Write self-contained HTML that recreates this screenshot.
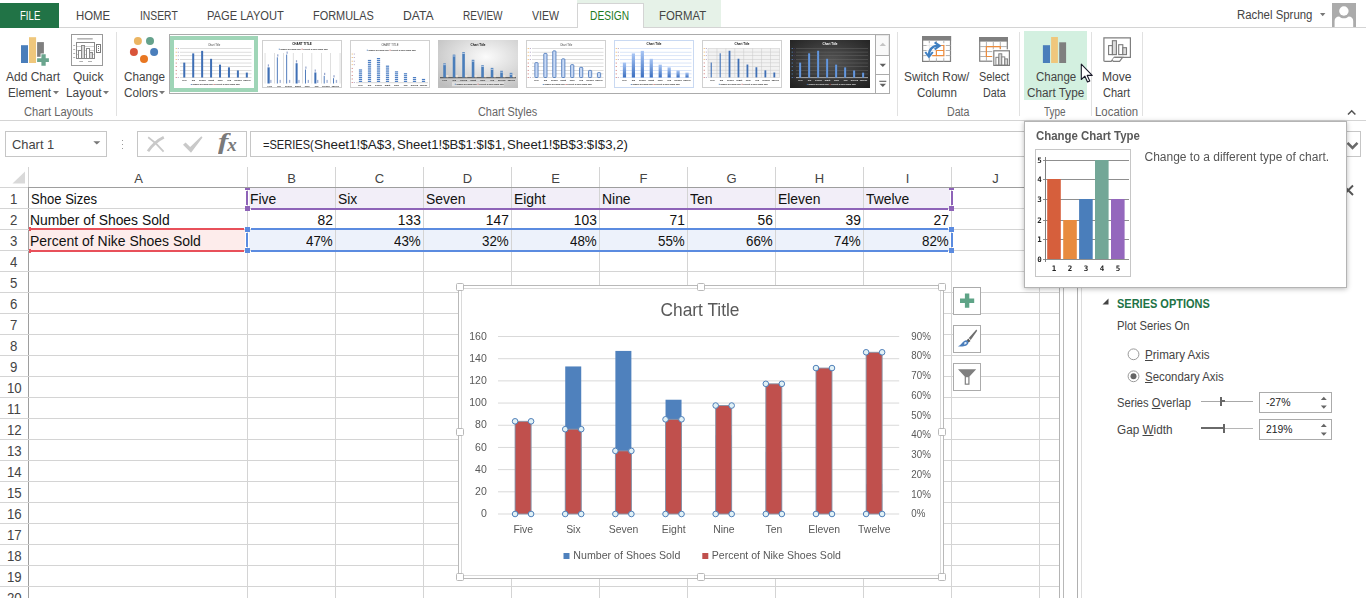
<!DOCTYPE html>
<html lang="en"><head><meta charset="utf-8"><title>Excel - Change Chart Type</title>
<style>
html,body{margin:0;padding:0;}
body{width:1366px;height:598px;overflow:hidden;background:#fff;position:relative;font-family:"Liberation Sans",sans-serif;}
.a{position:absolute;box-sizing:border-box;}
.t{position:absolute;white-space:nowrap;transform-origin:0 0;}
svg{position:absolute;overflow:visible;}
u{text-decoration:underline;}
</style></head><body>
<div class="a" style="left:577px;top:0px;width:144px;height:27px;background:#e6f2e8;"></div>
<div class="a" style="left:0px;top:27px;width:1366px;height:1px;background:#d4d4d4;"></div>
<div class="a" style="left:0px;top:3px;width:59px;height:25px;background:#217346;"></div>
<span class="t" style="left:19.50px;top:8.80px;font-size:12px;line-height:14px;color:#fff;transform:scaleX(0.8010);">FILE</span>
<span class="t" style="left:76.40px;top:8.80px;font-size:12px;line-height:14px;color:#444;transform:scaleX(0.9472);">HOME</span>
<span class="t" style="left:139.80px;top:8.80px;font-size:12px;line-height:14px;color:#444;transform:scaleX(0.8610);">INSERT</span>
<span class="t" style="left:207.00px;top:8.80px;font-size:12px;line-height:14px;color:#444;transform:scaleX(0.9263);">PAGE LAYOUT</span>
<span class="t" style="left:313.00px;top:8.80px;font-size:12px;line-height:14px;color:#444;transform:scaleX(0.9104);">FORMULAS</span>
<span class="t" style="left:403.00px;top:8.80px;font-size:12px;line-height:14px;color:#444;transform:scaleX(1.0157);">DATA</span>
<span class="t" style="left:463.40px;top:8.80px;font-size:12px;line-height:14px;color:#444;transform:scaleX(0.8365);">REVIEW</span>
<span class="t" style="left:531.90px;top:8.80px;font-size:12px;line-height:14px;color:#444;transform:scaleX(0.8836);">VIEW</span>
<div class="a" style="left:577px;top:3px;width:67px;height:25px;background:#fff;border:1px solid #d4d4d4;border-bottom:none;"></div>
<span class="t" style="left:590.40px;top:8.80px;font-size:12px;line-height:14px;color:#1e7a1e;transform:scaleX(0.8520);">DESIGN</span>
<span class="t" style="left:659.20px;top:8.80px;font-size:12px;line-height:14px;color:#444;transform:scaleX(0.9463);">FORMAT</span>
<span class="t" style="left:1236.80px;top:8.00px;font-size:12px;line-height:14px;color:#444;transform:scaleX(0.9498);">Rachel Sprung</span>
<svg style="left:1319px;top:12px" width="8" height="5"><path d="M1 1h5.4l-2.7 3.2z" fill="#777"/></svg>
<div class="a" style="left:1332px;top:3px;width:24px;height:24px;background:#ababab;"></div>
<svg style="left:1332px;top:3px" width="24" height="24"><circle cx="11.9" cy="8" r="4.7" fill="#fff"/><path d="M2.6 24v-6c0-3 2-4.6 4.500-4.600c1.500 1.300 3 1.800 4.800 1.800s3.300-0.500 4.800-1.800c2.500 0 4.500 1.600 4.500 4.600v6z" fill="#fff"/></svg>
<div class="a" style="left:0px;top:120px;width:1366px;height:1px;background:#d4d4d4;"></div>
<div class="a" style="left:116px;top:32px;width:1px;height:84px;background:#e1e1e1;"></div>
<div class="a" style="left:897px;top:32px;width:1px;height:84px;background:#e1e1e1;"></div>
<div class="a" style="left:1019px;top:32px;width:1px;height:84px;background:#e1e1e1;"></div>
<div class="a" style="left:1091px;top:32px;width:1px;height:84px;background:#e1e1e1;"></div>
<div class="a" style="left:1142px;top:32px;width:1px;height:84px;background:#e1e1e1;"></div>
<span class="t" style="left:6.00px;top:70.00px;font-size:12px;line-height:14px;color:#444;">Add Chart</span>
<span class="t" style="left:8.00px;top:85.50px;font-size:12px;line-height:14px;color:#444;transform:scaleX(0.9768);">Element</span>
<span class="t" style="left:72.60px;top:70.00px;font-size:12px;line-height:14px;color:#444;transform:scaleX(0.9911);">Quick</span>
<span class="t" style="left:65.50px;top:85.50px;font-size:12px;line-height:14px;color:#444;transform:scaleX(0.9853);">Layout</span>
<span class="t" style="left:124.00px;top:70.00px;font-size:12px;line-height:14px;color:#444;transform:scaleX(0.9753);">Change</span>
<span class="t" style="left:123.50px;top:85.50px;font-size:12px;line-height:14px;color:#444;transform:scaleX(0.9805);">Colors</span>
<svg style="left:53px;top:91px" width="7" height="4"><path d="M0 0h6l-3 3.2z" fill="#777"/></svg>
<svg style="left:103px;top:91px" width="7" height="4"><path d="M0 0h6l-3 3.2z" fill="#777"/></svg>
<svg style="left:159px;top:91px" width="7" height="4"><path d="M0 0h6l-3 3.2z" fill="#777"/></svg>
<span class="t" style="left:23.50px;top:104.70px;font-size:12px;line-height:14px;color:#666;transform:scaleX(0.9249);">Chart Layouts</span>
<span class="t" style="left:477.50px;top:104.50px;font-size:12px;line-height:14px;color:#666;transform:scaleX(0.9058);">Chart Styles</span>
<span class="t" style="left:946.50px;top:104.60px;font-size:12px;line-height:14px;color:#666;transform:scaleX(0.8876);">Data</span>
<span class="t" style="left:1044.40px;top:104.60px;font-size:12px;line-height:14px;color:#666;transform:scaleX(0.8302);">Type</span>
<span class="t" style="left:1095.20px;top:104.60px;font-size:12px;line-height:14px;color:#666;transform:scaleX(0.9500);">Location</span>
<div class="a" style="left:1024px;top:31px;width:63px;height:69px;background:#d3f0e0;"></div>
<span class="t" style="left:904.20px;top:70.00px;font-size:12px;line-height:14px;color:#444;transform:scaleX(0.9906);">Switch Row/</span>
<span class="t" style="left:916.60px;top:85.80px;font-size:12px;line-height:14px;color:#444;transform:scaleX(0.9649);">Column</span>
<span class="t" style="left:978.50px;top:70.00px;font-size:12px;line-height:14px;color:#444;transform:scaleX(0.9085);">Select</span>
<span class="t" style="left:982.50px;top:85.80px;font-size:12px;line-height:14px;color:#444;transform:scaleX(0.8955);">Data</span>
<span class="t" style="left:1035.50px;top:70.00px;font-size:12px;line-height:14px;color:#444;transform:scaleX(0.9563);">Change</span>
<span class="t" style="left:1026.60px;top:85.80px;font-size:12px;line-height:14px;color:#444;transform:scaleX(0.9781);">Chart Type</span>
<span class="t" style="left:1102.30px;top:70.00px;font-size:12px;line-height:14px;color:#444;transform:scaleX(1.0087);">Move</span>
<span class="t" style="left:1103.00px;top:85.80px;font-size:12px;line-height:14px;color:#444;transform:scaleX(0.9201);">Chart</span>
<svg style="left:1347px;top:109px" width="10" height="7"><path d="M1 5.5l3.7-3.7 3.7 3.7" fill="none" stroke="#555" stroke-width="1.6"/></svg>
<svg style="left:20px;top:36px" width="30" height="31">
<rect x="1" y="9.2" width="7" height="17.8" fill="#4a7ebb"/>
<rect x="9" y="1.2" width="7.1" height="25.8" fill="#efc77c"/>
<rect x="17.1" y="6.1" width="6.8" height="14.7" fill="#7f7f7f"/>
<path d="M20.6 17.6h5.8v4h3.4v5.2h-3.4v3.4h-5.8v-3.4h-4.2v-5.2h4.2z" fill="#fff"/>
<path d="M21.4 18.3h4.3v4h3.2v3.8h-3.2v3.6h-4.3v-3.6h-4.3v-3.8h4.3z" fill="#6aa58e"/>
</svg>
<svg style="left:71px;top:34px" width="33" height="33">
<rect x="0.5" y="0.5" width="31" height="31" fill="#fff" stroke="#9a9a9a"/>
<rect x="6.2" y="4" width="15.5" height="1.6" fill="#b5b5b5"/>
<rect x="5.5" y="8.5" width="18" height="16" fill="#fff" stroke="#8a8a8a"/>
<path d="M6 12.5h17M6 16.5h17M6 20.5h17" stroke="#cfcfcf" stroke-width="1"/>
<path d="M2.2 11.5h2M2.2 15.5h2M2.2 19.5h2M2.2 23.5h2" stroke="#b0b0b0"/>
<rect x="7.5" y="16.5" width="3" height="8" fill="#fff" stroke="#8a8a8a"/>
<rect x="10.5" y="11.5" width="3" height="13" fill="#d8d8d8" stroke="#8a8a8a"/>
<rect x="15.5" y="14.5" width="3" height="10" fill="#fff" stroke="#8a8a8a"/>
<rect x="18.5" y="18.5" width="3" height="6" fill="#d8d8d8" stroke="#8a8a8a"/>
<rect x="25.5" y="10.5" width="4" height="8" fill="#fff" stroke="#7a7a7a"/>
<path d="M27 12.5h1M27 14.5h1M27 16.5h1" stroke="#7a7a7a"/>
<path d="M8.3 27.5h3.7M17 27.5h4" stroke="#b0b0b0"/>
</svg>
<svg style="left:128px;top:35px" width="32" height="30">
<circle cx="9.9" cy="6" r="4" fill="#ebb563"/><circle cx="22" cy="6" r="4" fill="#65a28c"/>
<circle cx="5.9" cy="17" r="4" fill="#d9543a"/><circle cx="26.1" cy="17" r="4" fill="#4a7ebb"/>
<circle cx="16" cy="23.9" r="4" fill="#e87722"/></svg>
<svg style="left:922px;top:36px" width="30" height="27">
<rect x="0.6" y="0.6" width="27.9" height="24.8" fill="#fff" stroke="#7f7f7f" stroke-width="1.2"/>
<rect x="0" y="0" width="29.1" height="4.6" fill="#7f7f7f"/>
<path d="M1 9.5h27.5M1 14.5h27.5M1 19.6h27.5M7.3 4.6v21M14.4 4.6v21M21.8 4.6v21" stroke="#b0b0b0" stroke-width="1"/>
<path d="M4.5 7h19.5v15.2h-19.5z" fill="#fff" opacity="0.75"/>
<path d="M17.9 9.5H21.8V19.6H10.2M14.4 19.6V14.5H21.8" fill="none" stroke="#ee8c3c" stroke-width="1.2"/>
<path d="M7 19.5C6.8 13.5 10.5 9.8 16.5 9.7" fill="none" stroke="#3f7fc1" stroke-width="2.3"/>
<path d="M12.6 6.3l5.2 3.5-5.2 3.6" fill="none" stroke="#3f7fc1" stroke-width="2"/>
<path d="M3.3 16l3.7 4.8 3.8-4.8" fill="none" stroke="#3f7fc1" stroke-width="2"/>
</svg>
<svg style="left:979px;top:37px" width="33" height="30">
<rect x="0.7" y="0.6" width="27.6" height="23.6" fill="#fff" stroke="#7f7f7f" stroke-width="1.2"/>
<rect x="0.1" y="0" width="28.8" height="4.6" fill="#7f7f7f"/>
<path d="M1 9.6h27M1 14.6h27M1 19.5h27M7.4 4.6v19.5M14.3 4.6v19.5M21.3 4.6v19.5" stroke="#b0b0b0" stroke-width="1"/>
<path d="M21.3 12.2V9.6H7.4V19.5H13.5" fill="none" stroke="#ee8c3c" stroke-width="1.2"/>
<rect x="13.3" y="12.3" width="18.6" height="17.3" fill="#fff"/>
<rect x="14.8" y="13.8" width="15.6" height="14.6" fill="#fff" stroke="#7f7f7f" stroke-width="1.2"/>
<rect x="16.9" y="20.3" width="2.9" height="7.7" fill="#fff" stroke="#7a7a7a" stroke-width="0.9"/>
<rect x="19.8" y="16.8" width="3" height="11.2" fill="#d6d6d6" stroke="#7a7a7a" stroke-width="0.9"/>
<rect x="22.8" y="19.9" width="3" height="8.1" fill="#fff" stroke="#7a7a7a" stroke-width="0.9"/>
<rect x="25.8" y="21.9" width="2.8" height="6.1" fill="#d6d6d6" stroke="#7a7a7a" stroke-width="0.9"/>
</svg>
<svg style="left:1042px;top:36px" width="26" height="28">
<rect x="0.9" y="9.2" width="7.1" height="17.8" fill="#4a7ebb"/>
<rect x="9.1" y="1" width="6.8" height="26" fill="#efc77c"/>
<rect x="17.2" y="6.3" width="6.9" height="20.7" fill="#7f7f7f"/>
</svg>
<svg style="left:1103px;top:37px" width="29" height="27">
<path d="M0.9 0.9H27.4V20.4H11.2L8.2 24.4H1.9Q0.9 24.4 0.9 23.4Z" fill="#fff" stroke="#7f7f7f" stroke-width="1.2"/>
<path d="M11.2 20.4H19.6L16.6 24.4H10.2L9.3 23" fill="#fff" stroke="#7f7f7f" stroke-width="1.2"/>
<rect x="5.6" y="8.6" width="3.8" height="9" fill="#fff" stroke="#7a7a7a" stroke-width="1.1"/>
<rect x="9.4" y="3.7" width="4" height="13.9" fill="#dcdcdc" stroke="#7a7a7a" stroke-width="1.1"/>
<rect x="15.7" y="7.7" width="4.1" height="9.9" fill="#fff" stroke="#7a7a7a" stroke-width="1.1"/>
<rect x="19.8" y="10.7" width="3.7" height="6.9" fill="#dcdcdc" stroke="#7a7a7a" stroke-width="1.1"/>
</svg>
<div class="a" style="left:169px;top:34px;width:721px;height:60px;background:#fff;border:1px solid #ababab;"></div>
<div class="a" style="left:875px;top:34px;width:1px;height:59px;background:#ababab;"></div>
<div class="a" style="left:876px;top:55px;width:13px;height:1px;background:#ababab;"></div>
<div class="a" style="left:876px;top:74px;width:13px;height:1px;background:#ababab;"></div>
<div class="a" style="left:876px;top:35px;width:13px;height:20px;background:#f9f9f9;border:1px solid #e6e6e6;border-left:none;border-bottom:none;"></div>
<svg style="left:879px;top:42px" width="8" height="5"><path d="M0.6 4h6.4l-3.2-3.2z" fill="#c4c4c4"/></svg>
<svg style="left:879px;top:63px" width="8" height="5"><path d="M0.6 0.8h6.4l-3.2 3.2z" fill="#5f5f5f"/></svg>
<svg style="left:879px;top:80px" width="8" height="9"><path d="M0.3 1.3h7" stroke="#5f5f5f" stroke-width="1.1"/><path d="M0.6 3.8h6.4l-3.2 3.2z" fill="#5f5f5f"/></svg>
<div class="a" style="left:170px;top:36px;width:88px;height:56px;background:#9fd5b7;"></div>
<svg style="left:174px;top:40px;will-change:transform" width="80" height="48" viewBox="0 0 80 48"><rect x="0.5" y="0.5" width="79" height="47" fill="#fff" stroke="#fff"/><text x="40" y="5.5" font-size="2.7" font-weight="normal" text-anchor="middle" fill="#444" font-family="Liberation Sans,sans-serif">Chart Title</text><rect x="6" y="8.25" width="71.5" height="0.55" fill="#c2c2c2"/><rect x="6" y="11.88" width="71.5" height="0.55" fill="#c2c2c2"/><rect x="6" y="15.50" width="71.5" height="0.55" fill="#c2c2c2"/><rect x="6" y="19.12" width="71.5" height="0.55" fill="#c2c2c2"/><rect x="6" y="22.75" width="71.5" height="0.55" fill="#c2c2c2"/><rect x="6" y="26.38" width="71.5" height="0.55" fill="#c2c2c2"/><rect x="6" y="30.00" width="71.5" height="0.55" fill="#c2c2c2"/><rect x="6" y="33.62" width="71.5" height="0.55" fill="#c2c2c2"/><rect x="6" y="37.25" width="71.5" height="0.55" fill="#c2c2c2"/><rect x="1.5999999999999996" y="8.20" width="1.4" height="0.7" fill="#e9a23b" opacity="0.8"/><rect x="3.8" y="8.20" width="0.9" height="0.7" fill="#5b3f8c" opacity="0.8"/><rect x="1.5999999999999996" y="11.82" width="1.4" height="0.7" fill="#e9a23b" opacity="0.8"/><rect x="3.8" y="11.82" width="0.9" height="0.7" fill="#5b3f8c" opacity="0.8"/><rect x="1.5999999999999996" y="15.45" width="1.4" height="0.7" fill="#e9a23b" opacity="0.8"/><rect x="3.8" y="15.45" width="0.9" height="0.7" fill="#5b3f8c" opacity="0.8"/><rect x="1.5999999999999996" y="19.07" width="1.4" height="0.7" fill="#e9a23b" opacity="0.8"/><rect x="3.8" y="19.07" width="0.9" height="0.7" fill="#5b3f8c" opacity="0.8"/><rect x="1.5999999999999996" y="22.70" width="1.4" height="0.7" fill="#c0504d" opacity="0.8"/><rect x="1.5999999999999996" y="26.32" width="1.4" height="0.7" fill="#c0504d" opacity="0.8"/><rect x="1.5999999999999996" y="29.95" width="1.4" height="0.7" fill="#c0504d" opacity="0.8"/><rect x="1.5999999999999996" y="33.58" width="1.4" height="0.7" fill="#c0504d" opacity="0.8"/><rect x="1.5999999999999996" y="37.20" width="1.4" height="0.7" fill="#c0504d" opacity="0.8"/><rect x="3.8" y="37.20" width="0.9" height="0.7" fill="#5b3f8c" opacity="0.8"/><rect x="9.27" y="22.64" width="2" height="14.86" fill="#3f6fb5"/><rect x="18.21" y="13.39" width="2" height="24.11" fill="#3f6fb5"/><rect x="27.14" y="10.86" width="2" height="26.64" fill="#3f6fb5"/><rect x="36.08" y="18.83" width="2" height="18.67" fill="#3f6fb5"/><rect x="45.02" y="24.63" width="2" height="12.87" fill="#3f6fb5"/><rect x="53.96" y="27.35" width="2" height="10.15" fill="#3f6fb5"/><rect x="62.89" y="30.43" width="2" height="7.07" fill="#3f6fb5"/><rect x="71.83" y="32.61" width="2" height="4.89" fill="#3f6fb5"/><text x="10.47" y="41.3" font-size="2.3" font-weight="bold" text-anchor="middle" fill="#222" font-family="Liberation Sans,sans-serif">Five</text><text x="19.41" y="41.3" font-size="2.3" font-weight="bold" text-anchor="middle" fill="#222" font-family="Liberation Sans,sans-serif">Six</text><text x="28.34" y="41.3" font-size="2.3" font-weight="bold" text-anchor="middle" fill="#222" font-family="Liberation Sans,sans-serif">Seven</text><text x="37.28" y="41.3" font-size="2.3" font-weight="bold" text-anchor="middle" fill="#222" font-family="Liberation Sans,sans-serif">Eight</text><text x="46.22" y="41.3" font-size="2.3" font-weight="bold" text-anchor="middle" fill="#222" font-family="Liberation Sans,sans-serif">Nine</text><text x="55.16" y="41.3" font-size="2.3" font-weight="bold" text-anchor="middle" fill="#222" font-family="Liberation Sans,sans-serif">Ten</text><text x="64.09" y="41.3" font-size="2.3" font-weight="bold" text-anchor="middle" fill="#222" font-family="Liberation Sans,sans-serif">Eleven</text><text x="73.03" y="41.3" font-size="2.3" font-weight="bold" text-anchor="middle" fill="#222" font-family="Liberation Sans,sans-serif">Twelve</text><rect x="16.8" y="44.0" width="1" height="1" fill="#4a7ebb"/><text x="18.4" y="45.3" font-size="1.9" font-weight="bold" fill="#222" font-family="Liberation Sans,sans-serif">Number of Shoes Sold</text><rect x="39.6" y="44.0" width="1" height="1" fill="#c0504d"/><text x="41.2" y="45.3" font-size="1.9" font-weight="bold" fill="#222" font-family="Liberation Sans,sans-serif">Percent of Nike Shoes Sold</text></svg>
<svg style="left:262px;top:40px;will-change:transform" width="80" height="48" viewBox="0 0 80 48"><rect x="0.5" y="0.5" width="79" height="47" fill="#fff" stroke="#d0d0d0"/><text x="40" y="5" font-size="3.0" font-weight="bold" text-anchor="middle" fill="#111" font-family="Liberation Sans,sans-serif">CHART TITLE</text><rect x="2.80" y="13" width="0.45" height="30.5" fill="#b8b8b8"/><rect x="12.18" y="13" width="0.45" height="30.5" fill="#b8b8b8"/><rect x="21.55" y="13" width="0.45" height="30.5" fill="#b8b8b8"/><rect x="30.93" y="13" width="0.45" height="30.5" fill="#b8b8b8"/><rect x="40.30" y="13" width="0.45" height="30.5" fill="#b8b8b8"/><rect x="49.67" y="13" width="0.45" height="30.5" fill="#b8b8b8"/><rect x="59.05" y="13" width="0.45" height="30.5" fill="#b8b8b8"/><rect x="68.42" y="13" width="0.45" height="30.5" fill="#b8b8b8"/><rect x="77.80" y="13" width="0.45" height="30.5" fill="#b8b8b8"/><rect x="5.49" y="27.36" width="2.2" height="16.14" fill="#3f6fb5"/><rect x="5.79" y="24.36" width="1.2" height="2.2" fill="#7b8fc0" opacity="0.8"/><rect x="8.19" y="39.90" width="1.3" height="3" fill="#7b8fc0" opacity="0.7"/><rect x="14.86" y="17.32" width="0.9" height="26.18" fill="#3f6fb5"/><rect x="15.16" y="14.32" width="1.2" height="2.2" fill="#7b8fc0" opacity="0.8"/><rect x="17.56" y="39.90" width="1.3" height="3" fill="#7b8fc0" opacity="0.7"/><rect x="24.24" y="14.56" width="0.9" height="28.94" fill="#3f6fb5"/><rect x="24.54" y="11.56" width="1.2" height="2.2" fill="#7b8fc0" opacity="0.8"/><rect x="26.94" y="39.90" width="1.3" height="3" fill="#7b8fc0" opacity="0.7"/><rect x="33.61" y="23.22" width="2" height="20.28" fill="#3f6fb5"/><rect x="33.91" y="20.22" width="1.2" height="2.2" fill="#7b8fc0" opacity="0.8"/><rect x="36.31" y="39.90" width="1.3" height="3" fill="#7b8fc0" opacity="0.7"/><rect x="42.99" y="29.52" width="0.9" height="13.98" fill="#3f6fb5"/><rect x="43.29" y="26.52" width="1.2" height="2.2" fill="#7b8fc0" opacity="0.8"/><rect x="45.69" y="39.90" width="1.3" height="3" fill="#7b8fc0" opacity="0.7"/><rect x="52.36" y="32.48" width="2" height="11.03" fill="#3f6fb5"/><rect x="52.66" y="29.48" width="1.2" height="2.2" fill="#7b8fc0" opacity="0.8"/><rect x="55.06" y="39.90" width="1.3" height="3" fill="#7b8fc0" opacity="0.7"/><rect x="61.74" y="35.82" width="0.9" height="7.68" fill="#3f6fb5"/><rect x="62.04" y="32.82" width="1.2" height="2.2" fill="#7b8fc0" opacity="0.8"/><rect x="64.44" y="39.90" width="1.3" height="3" fill="#7b8fc0" opacity="0.7"/><rect x="71.11" y="38.18" width="0.9" height="5.32" fill="#3f6fb5"/><rect x="71.41" y="35.18" width="1.2" height="2.2" fill="#7b8fc0" opacity="0.8"/><rect x="73.81" y="39.90" width="1.3" height="3" fill="#7b8fc0" opacity="0.7"/><text x="7.69" y="46.8" font-size="2.3" font-weight="bold" text-anchor="middle" fill="#222" font-family="Liberation Sans,sans-serif">Five</text><text x="17.06" y="46.8" font-size="2.3" font-weight="bold" text-anchor="middle" fill="#222" font-family="Liberation Sans,sans-serif">Six</text><text x="26.44" y="46.8" font-size="2.3" font-weight="bold" text-anchor="middle" fill="#222" font-family="Liberation Sans,sans-serif">Seven</text><text x="35.81" y="46.8" font-size="2.3" font-weight="bold" text-anchor="middle" fill="#222" font-family="Liberation Sans,sans-serif">Eight</text><text x="45.19" y="46.8" font-size="2.3" font-weight="bold" text-anchor="middle" fill="#222" font-family="Liberation Sans,sans-serif">Nine</text><text x="54.56" y="46.8" font-size="2.3" font-weight="bold" text-anchor="middle" fill="#222" font-family="Liberation Sans,sans-serif">Ten</text><text x="63.94" y="46.8" font-size="2.3" font-weight="bold" text-anchor="middle" fill="#222" font-family="Liberation Sans,sans-serif">Eleven</text><text x="73.31" y="46.8" font-size="2.3" font-weight="bold" text-anchor="middle" fill="#222" font-family="Liberation Sans,sans-serif">Twelve</text><rect x="16.8" y="8.7" width="1" height="1" fill="#4a7ebb"/><text x="18.4" y="10.0" font-size="1.9" font-weight="bold" fill="#222" font-family="Liberation Sans,sans-serif">Number of Shoes Sold</text><rect x="39.6" y="8.7" width="1" height="1" fill="#c0504d"/><text x="41.2" y="10.0" font-size="1.9" font-weight="bold" fill="#222" font-family="Liberation Sans,sans-serif">Percent of Nike Shoes Sold</text></svg>
<svg style="left:350px;top:40px;will-change:transform" width="80" height="48" viewBox="0 0 80 48"><rect x="0.5" y="0.5" width="79" height="47" fill="#fff" stroke="#d0d0d0"/><text x="40" y="6" font-size="2.7" font-weight="normal" text-anchor="middle" fill="#444" font-family="Liberation Sans,sans-serif">CHART TITLE</text><rect x="6" y="42.5" width="72" height="0.6" fill="#bdbdbd"/><rect x="1.5999999999999996" y="13.70" width="1.4" height="0.7" fill="#e9a23b" opacity="0.8"/><rect x="3.8" y="13.70" width="0.9" height="0.7" fill="#5b3f8c" opacity="0.8"/><rect x="1.5999999999999996" y="17.26" width="1.4" height="0.7" fill="#e9a23b" opacity="0.8"/><rect x="3.8" y="17.26" width="0.9" height="0.7" fill="#5b3f8c" opacity="0.8"/><rect x="1.5999999999999996" y="20.82" width="1.4" height="0.7" fill="#e9a23b" opacity="0.8"/><rect x="3.8" y="20.82" width="0.9" height="0.7" fill="#5b3f8c" opacity="0.8"/><rect x="1.5999999999999996" y="24.39" width="1.4" height="0.7" fill="#e9a23b" opacity="0.8"/><rect x="3.8" y="24.39" width="0.9" height="0.7" fill="#5b3f8c" opacity="0.8"/><rect x="1.5999999999999996" y="27.95" width="1.4" height="0.7" fill="#c0504d" opacity="0.8"/><rect x="1.5999999999999996" y="31.51" width="1.4" height="0.7" fill="#c0504d" opacity="0.8"/><rect x="1.5999999999999996" y="35.08" width="1.4" height="0.7" fill="#c0504d" opacity="0.8"/><rect x="1.5999999999999996" y="38.64" width="1.4" height="0.7" fill="#c0504d" opacity="0.8"/><rect x="1.5999999999999996" y="42.20" width="1.4" height="0.7" fill="#c0504d" opacity="0.8"/><rect x="3.8" y="42.20" width="0.9" height="0.7" fill="#5b3f8c" opacity="0.8"/><rect x="8.90" y="40.80" width="3.2" height="1.2" fill="#4d7fc4"/><rect x="8.90" y="38.90" width="3.2" height="1.2" fill="#4d7fc4"/><rect x="8.90" y="37.00" width="3.2" height="1.2" fill="#4d7fc4"/><rect x="8.90" y="35.10" width="3.2" height="1.2" fill="#4d7fc4"/><rect x="8.90" y="33.20" width="3.2" height="1.2" fill="#4d7fc4"/><rect x="8.90" y="31.30" width="3.2" height="1.2" fill="#4d7fc4"/><rect x="8.90" y="29.40" width="3.2" height="1.2" fill="#4d7fc4"/><rect x="17.90" y="40.80" width="3.2" height="1.2" fill="#4d7fc4"/><rect x="17.90" y="38.90" width="3.2" height="1.2" fill="#4d7fc4"/><rect x="17.90" y="37.00" width="3.2" height="1.2" fill="#4d7fc4"/><rect x="17.90" y="35.10" width="3.2" height="1.2" fill="#4d7fc4"/><rect x="17.90" y="33.20" width="3.2" height="1.2" fill="#4d7fc4"/><rect x="17.90" y="31.30" width="3.2" height="1.2" fill="#4d7fc4"/><rect x="17.90" y="29.40" width="3.2" height="1.2" fill="#4d7fc4"/><rect x="17.90" y="27.50" width="3.2" height="1.2" fill="#4d7fc4"/><rect x="17.90" y="25.60" width="3.2" height="1.2" fill="#4d7fc4"/><rect x="17.90" y="23.70" width="3.2" height="1.2" fill="#4d7fc4"/><rect x="17.90" y="21.80" width="3.2" height="1.2" fill="#4d7fc4"/><rect x="17.90" y="19.90" width="3.2" height="1.2" fill="#4d7fc4"/><rect x="26.90" y="40.80" width="3.2" height="1.2" fill="#4d7fc4"/><rect x="26.90" y="38.90" width="3.2" height="1.2" fill="#4d7fc4"/><rect x="26.90" y="37.00" width="3.2" height="1.2" fill="#4d7fc4"/><rect x="26.90" y="35.10" width="3.2" height="1.2" fill="#4d7fc4"/><rect x="26.90" y="33.20" width="3.2" height="1.2" fill="#4d7fc4"/><rect x="26.90" y="31.30" width="3.2" height="1.2" fill="#4d7fc4"/><rect x="26.90" y="29.40" width="3.2" height="1.2" fill="#4d7fc4"/><rect x="26.90" y="27.50" width="3.2" height="1.2" fill="#4d7fc4"/><rect x="26.90" y="25.60" width="3.2" height="1.2" fill="#4d7fc4"/><rect x="26.90" y="23.70" width="3.2" height="1.2" fill="#4d7fc4"/><rect x="26.90" y="21.80" width="3.2" height="1.2" fill="#4d7fc4"/><rect x="26.90" y="19.90" width="3.2" height="1.2" fill="#4d7fc4"/><rect x="26.90" y="18.00" width="3.2" height="1.2" fill="#4d7fc4"/><rect x="35.90" y="40.80" width="3.2" height="1.2" fill="#4d7fc4"/><rect x="35.90" y="38.90" width="3.2" height="1.2" fill="#4d7fc4"/><rect x="35.90" y="37.00" width="3.2" height="1.2" fill="#4d7fc4"/><rect x="35.90" y="35.10" width="3.2" height="1.2" fill="#4d7fc4"/><rect x="35.90" y="33.20" width="3.2" height="1.2" fill="#4d7fc4"/><rect x="35.90" y="31.30" width="3.2" height="1.2" fill="#4d7fc4"/><rect x="35.90" y="29.40" width="3.2" height="1.2" fill="#4d7fc4"/><rect x="35.90" y="27.50" width="3.2" height="1.2" fill="#4d7fc4"/><rect x="35.90" y="25.60" width="3.2" height="1.2" fill="#4d7fc4"/><rect x="44.90" y="40.80" width="3.2" height="1.2" fill="#4d7fc4"/><rect x="44.90" y="38.90" width="3.2" height="1.2" fill="#4d7fc4"/><rect x="44.90" y="37.00" width="3.2" height="1.2" fill="#4d7fc4"/><rect x="44.90" y="35.10" width="3.2" height="1.2" fill="#4d7fc4"/><rect x="44.90" y="33.20" width="3.2" height="1.2" fill="#4d7fc4"/><rect x="44.90" y="31.30" width="3.2" height="1.2" fill="#4d7fc4"/><rect x="53.90" y="40.80" width="3.2" height="1.2" fill="#4d7fc4"/><rect x="53.90" y="38.90" width="3.2" height="1.2" fill="#4d7fc4"/><rect x="53.90" y="37.00" width="3.2" height="1.2" fill="#4d7fc4"/><rect x="53.90" y="35.10" width="3.2" height="1.2" fill="#4d7fc4"/><rect x="53.90" y="33.20" width="3.2" height="1.2" fill="#4d7fc4"/><rect x="62.90" y="40.80" width="3.2" height="1.2" fill="#4d7fc4"/><rect x="62.90" y="38.90" width="3.2" height="1.2" fill="#4d7fc4"/><rect x="62.90" y="37.00" width="3.2" height="1.2" fill="#4d7fc4"/><rect x="71.90" y="40.80" width="3.2" height="1.2" fill="#4d7fc4"/><rect x="71.90" y="38.90" width="3.2" height="1.2" fill="#4d7fc4"/><text x="10.50" y="46.3" font-size="2.3" font-weight="bold" text-anchor="middle" fill="#222" font-family="Liberation Sans,sans-serif">Five</text><text x="19.50" y="46.3" font-size="2.3" font-weight="bold" text-anchor="middle" fill="#222" font-family="Liberation Sans,sans-serif">Six</text><text x="28.50" y="46.3" font-size="2.3" font-weight="bold" text-anchor="middle" fill="#222" font-family="Liberation Sans,sans-serif">Seven</text><text x="37.50" y="46.3" font-size="2.3" font-weight="bold" text-anchor="middle" fill="#222" font-family="Liberation Sans,sans-serif">Eight</text><text x="46.50" y="46.3" font-size="2.3" font-weight="bold" text-anchor="middle" fill="#222" font-family="Liberation Sans,sans-serif">Nine</text><text x="55.50" y="46.3" font-size="2.3" font-weight="bold" text-anchor="middle" fill="#222" font-family="Liberation Sans,sans-serif">Ten</text><text x="64.50" y="46.3" font-size="2.3" font-weight="bold" text-anchor="middle" fill="#222" font-family="Liberation Sans,sans-serif">Eleven</text><text x="73.50" y="46.3" font-size="2.3" font-weight="bold" text-anchor="middle" fill="#222" font-family="Liberation Sans,sans-serif">Twelve</text><rect x="16.8" y="9.7" width="1" height="1" fill="#4a7ebb"/><text x="18.4" y="11.0" font-size="1.9" font-weight="bold" fill="#222" font-family="Liberation Sans,sans-serif">Number of Shoes Sold</text><rect x="39.6" y="9.7" width="1" height="1" fill="#c0504d"/><text x="41.2" y="11.0" font-size="1.9" font-weight="bold" fill="#222" font-family="Liberation Sans,sans-serif">Percent of Nike Shoes Sold</text></svg>
<svg style="left:438px;top:40px;will-change:transform" width="80" height="48" viewBox="0 0 80 48"><defs><radialGradient id="g4" cx="0.6" cy="0.35" r="0.8"><stop offset="0" stop-color="#fbfbfb"/><stop offset="1" stop-color="#bdbdbd"/></radialGradient></defs><rect width="80" height="48" fill="url(#g4)"/><text x="40" y="6" font-size="3.0" font-weight="bold" text-anchor="middle" fill="#111" font-family="Liberation Sans,sans-serif">Chart Title</text><rect x="2" y="37.3" width="76" height="0.9" fill="#333"/><rect x="5.25" y="23.41" width="2.6" height="14.09" fill="#4a7ebb"/><rect x="5.25" y="24.41" width="2.6" height="0.7" fill="#dfe8f5"/><rect x="8.35" y="35.00" width="2" height="2.3" fill="#f1e6da" opacity="0.9"/><rect x="14.75" y="14.64" width="2.6" height="22.86" fill="#4a7ebb"/><rect x="14.75" y="15.64" width="2.6" height="0.7" fill="#dfe8f5"/><rect x="17.85" y="35.00" width="2" height="2.3" fill="#f1e6da" opacity="0.9"/><rect x="24.25" y="12.23" width="2.6" height="25.27" fill="#4a7ebb"/><rect x="24.25" y="13.23" width="2.6" height="0.7" fill="#dfe8f5"/><rect x="27.35" y="35.00" width="2" height="2.3" fill="#f1e6da" opacity="0.9"/><rect x="33.75" y="19.80" width="2.6" height="17.70" fill="#4a7ebb"/><rect x="33.75" y="20.80" width="2.6" height="0.7" fill="#dfe8f5"/><rect x="36.85" y="35.00" width="2" height="2.3" fill="#f1e6da" opacity="0.9"/><rect x="43.25" y="25.30" width="2.6" height="12.20" fill="#4a7ebb"/><rect x="43.25" y="26.30" width="2.6" height="0.7" fill="#dfe8f5"/><rect x="46.35" y="35.00" width="2" height="2.3" fill="#f1e6da" opacity="0.9"/><rect x="52.75" y="27.88" width="2.6" height="9.62" fill="#4a7ebb"/><rect x="52.75" y="28.88" width="2.6" height="0.7" fill="#dfe8f5"/><rect x="55.85" y="35.00" width="2" height="2.3" fill="#f1e6da" opacity="0.9"/><rect x="62.25" y="30.80" width="2.6" height="6.70" fill="#4a7ebb"/><rect x="62.25" y="31.80" width="2.6" height="0.7" fill="#dfe8f5"/><rect x="65.35" y="35.00" width="2" height="2.3" fill="#f1e6da" opacity="0.9"/><rect x="71.75" y="32.86" width="2.6" height="4.64" fill="#4a7ebb"/><rect x="71.75" y="33.86" width="2.6" height="0.7" fill="#dfe8f5"/><rect x="74.85" y="35.00" width="2" height="2.3" fill="#f1e6da" opacity="0.9"/><text x="6.75" y="41.3" font-size="2.3" font-weight="bold" text-anchor="middle" fill="#222" font-family="Liberation Sans,sans-serif">Five</text><text x="16.25" y="41.3" font-size="2.3" font-weight="bold" text-anchor="middle" fill="#222" font-family="Liberation Sans,sans-serif">Six</text><text x="25.75" y="41.3" font-size="2.3" font-weight="bold" text-anchor="middle" fill="#222" font-family="Liberation Sans,sans-serif">Seven</text><text x="35.25" y="41.3" font-size="2.3" font-weight="bold" text-anchor="middle" fill="#222" font-family="Liberation Sans,sans-serif">Eight</text><text x="44.75" y="41.3" font-size="2.3" font-weight="bold" text-anchor="middle" fill="#222" font-family="Liberation Sans,sans-serif">Nine</text><text x="54.25" y="41.3" font-size="2.3" font-weight="bold" text-anchor="middle" fill="#222" font-family="Liberation Sans,sans-serif">Ten</text><text x="63.75" y="41.3" font-size="2.3" font-weight="bold" text-anchor="middle" fill="#222" font-family="Liberation Sans,sans-serif">Eleven</text><text x="73.25" y="41.3" font-size="2.3" font-weight="bold" text-anchor="middle" fill="#222" font-family="Liberation Sans,sans-serif">Twelve</text><rect x="14" y="42.2" width="52" height="4" fill="#e6e6e6" opacity="0.8"/><rect x="16.8" y="43.7" width="1" height="1" fill="#4a7ebb"/><text x="18.4" y="45.0" font-size="1.9" font-weight="bold" fill="#222" font-family="Liberation Sans,sans-serif">Number of Shoes Sold</text><rect x="39.6" y="43.7" width="1" height="1" fill="#c0504d"/><text x="41.2" y="45.0" font-size="1.9" font-weight="bold" fill="#222" font-family="Liberation Sans,sans-serif">Percent of Nike Shoes Sold</text></svg>
<svg style="left:526px;top:40px;will-change:transform" width="80" height="48" viewBox="0 0 80 48"><rect x="0.5" y="0.5" width="79" height="47" fill="#fff" stroke="#d0d0d0"/><text x="40" y="5.5" font-size="2.7" font-weight="normal" text-anchor="middle" fill="#444" font-family="Liberation Sans,sans-serif">Chart Title</text><rect x="6" y="8.25" width="71.5" height="0.55" fill="#c2c2c2"/><rect x="6" y="11.88" width="71.5" height="0.55" fill="#c2c2c2"/><rect x="6" y="15.50" width="71.5" height="0.55" fill="#c2c2c2"/><rect x="6" y="19.12" width="71.5" height="0.55" fill="#c2c2c2"/><rect x="6" y="22.75" width="71.5" height="0.55" fill="#c2c2c2"/><rect x="6" y="26.38" width="71.5" height="0.55" fill="#c2c2c2"/><rect x="6" y="30.00" width="71.5" height="0.55" fill="#c2c2c2"/><rect x="6" y="33.62" width="71.5" height="0.55" fill="#c2c2c2"/><rect x="6" y="37.25" width="71.5" height="0.55" fill="#c2c2c2"/><rect x="1.5999999999999996" y="8.20" width="1.4" height="0.7" fill="#e9a23b" opacity="0.8"/><rect x="3.8" y="8.20" width="0.9" height="0.7" fill="#5b3f8c" opacity="0.8"/><rect x="1.5999999999999996" y="11.82" width="1.4" height="0.7" fill="#e9a23b" opacity="0.8"/><rect x="3.8" y="11.82" width="0.9" height="0.7" fill="#5b3f8c" opacity="0.8"/><rect x="1.5999999999999996" y="15.45" width="1.4" height="0.7" fill="#e9a23b" opacity="0.8"/><rect x="3.8" y="15.45" width="0.9" height="0.7" fill="#5b3f8c" opacity="0.8"/><rect x="1.5999999999999996" y="19.07" width="1.4" height="0.7" fill="#e9a23b" opacity="0.8"/><rect x="3.8" y="19.07" width="0.9" height="0.7" fill="#5b3f8c" opacity="0.8"/><rect x="1.5999999999999996" y="22.70" width="1.4" height="0.7" fill="#c0504d" opacity="0.8"/><rect x="1.5999999999999996" y="26.32" width="1.4" height="0.7" fill="#c0504d" opacity="0.8"/><rect x="1.5999999999999996" y="29.95" width="1.4" height="0.7" fill="#c0504d" opacity="0.8"/><rect x="1.5999999999999996" y="33.58" width="1.4" height="0.7" fill="#c0504d" opacity="0.8"/><rect x="1.5999999999999996" y="37.20" width="1.4" height="0.7" fill="#c0504d" opacity="0.8"/><rect x="3.8" y="37.20" width="0.9" height="0.7" fill="#5b3f8c" opacity="0.8"/><rect x="8.87" y="22.64" width="3.2" height="14.86" rx="0.8" fill="#c9daf5" stroke="#3f6fb5" stroke-width="0.8"/><rect x="17.81" y="13.39" width="3.2" height="24.11" rx="0.8" fill="#c9daf5" stroke="#3f6fb5" stroke-width="0.8"/><rect x="26.74" y="10.86" width="3.2" height="26.64" rx="0.8" fill="#c9daf5" stroke="#3f6fb5" stroke-width="0.8"/><rect x="35.68" y="18.83" width="3.2" height="18.67" rx="0.8" fill="#c9daf5" stroke="#3f6fb5" stroke-width="0.8"/><rect x="44.62" y="24.63" width="3.2" height="12.87" rx="0.8" fill="#c9daf5" stroke="#3f6fb5" stroke-width="0.8"/><rect x="53.56" y="27.35" width="3.2" height="10.15" rx="0.8" fill="#c9daf5" stroke="#3f6fb5" stroke-width="0.8"/><rect x="62.49" y="30.43" width="3.2" height="7.07" rx="0.8" fill="#c9daf5" stroke="#3f6fb5" stroke-width="0.8"/><rect x="71.43" y="32.61" width="3.2" height="4.89" rx="0.8" fill="#c9daf5" stroke="#3f6fb5" stroke-width="0.8"/><text x="10.47" y="41.3" font-size="2.3" font-weight="bold" text-anchor="middle" fill="#222" font-family="Liberation Sans,sans-serif">Five</text><text x="19.41" y="41.3" font-size="2.3" font-weight="bold" text-anchor="middle" fill="#222" font-family="Liberation Sans,sans-serif">Six</text><text x="28.34" y="41.3" font-size="2.3" font-weight="bold" text-anchor="middle" fill="#222" font-family="Liberation Sans,sans-serif">Seven</text><text x="37.28" y="41.3" font-size="2.3" font-weight="bold" text-anchor="middle" fill="#222" font-family="Liberation Sans,sans-serif">Eight</text><text x="46.22" y="41.3" font-size="2.3" font-weight="bold" text-anchor="middle" fill="#222" font-family="Liberation Sans,sans-serif">Nine</text><text x="55.16" y="41.3" font-size="2.3" font-weight="bold" text-anchor="middle" fill="#222" font-family="Liberation Sans,sans-serif">Ten</text><text x="64.09" y="41.3" font-size="2.3" font-weight="bold" text-anchor="middle" fill="#222" font-family="Liberation Sans,sans-serif">Eleven</text><text x="73.03" y="41.3" font-size="2.3" font-weight="bold" text-anchor="middle" fill="#222" font-family="Liberation Sans,sans-serif">Twelve</text><rect x="16.8" y="44.0" width="1" height="1" fill="#4a7ebb"/><text x="18.4" y="45.3" font-size="1.9" font-weight="bold" fill="#222" font-family="Liberation Sans,sans-serif">Number of Shoes Sold</text><rect x="39.6" y="44.0" width="1" height="1" fill="#c0504d"/><text x="41.2" y="45.3" font-size="1.9" font-weight="bold" fill="#222" font-family="Liberation Sans,sans-serif">Percent of Nike Shoes Sold</text></svg>
<svg style="left:614px;top:40px;will-change:transform" width="80" height="48" viewBox="0 0 80 48"><defs><linearGradient id="g6" x1="0" y1="0" x2="0" y2="1"><stop offset="0" stop-color="#a9c6f5"/><stop offset="1" stop-color="#3b6fc0"/></linearGradient></defs><rect x="0.5" y="0.5" width="79" height="47" fill="#fff" stroke="#c9d9f2"/><text x="40" y="5" font-size="3.0" font-weight="bold" text-anchor="middle" fill="#111" font-family="Liberation Sans,sans-serif">Chart Title</text><rect x="6" y="8.25" width="71.5" height="0.55" fill="#bcd0f2"/><rect x="6" y="11.88" width="71.5" height="0.55" fill="#bcd0f2"/><rect x="6" y="15.50" width="71.5" height="0.55" fill="#bcd0f2"/><rect x="6" y="19.12" width="71.5" height="0.55" fill="#bcd0f2"/><rect x="6" y="22.75" width="71.5" height="0.55" fill="#bcd0f2"/><rect x="6" y="26.38" width="71.5" height="0.55" fill="#bcd0f2"/><rect x="6" y="30.00" width="71.5" height="0.55" fill="#bcd0f2"/><rect x="6" y="33.62" width="71.5" height="0.55" fill="#bcd0f2"/><rect x="6" y="37.25" width="71.5" height="0.55" fill="#bcd0f2"/><rect x="1.5999999999999996" y="8.20" width="1.4" height="0.7" fill="#e9a23b" opacity="0.8"/><rect x="3.8" y="8.20" width="0.9" height="0.7" fill="#5b3f8c" opacity="0.8"/><rect x="1.5999999999999996" y="11.82" width="1.4" height="0.7" fill="#e9a23b" opacity="0.8"/><rect x="3.8" y="11.82" width="0.9" height="0.7" fill="#5b3f8c" opacity="0.8"/><rect x="1.5999999999999996" y="15.45" width="1.4" height="0.7" fill="#e9a23b" opacity="0.8"/><rect x="3.8" y="15.45" width="0.9" height="0.7" fill="#5b3f8c" opacity="0.8"/><rect x="1.5999999999999996" y="19.07" width="1.4" height="0.7" fill="#e9a23b" opacity="0.8"/><rect x="3.8" y="19.07" width="0.9" height="0.7" fill="#5b3f8c" opacity="0.8"/><rect x="1.5999999999999996" y="22.70" width="1.4" height="0.7" fill="#c0504d" opacity="0.8"/><rect x="1.5999999999999996" y="26.32" width="1.4" height="0.7" fill="#c0504d" opacity="0.8"/><rect x="1.5999999999999996" y="29.95" width="1.4" height="0.7" fill="#c0504d" opacity="0.8"/><rect x="1.5999999999999996" y="33.58" width="1.4" height="0.7" fill="#c0504d" opacity="0.8"/><rect x="1.5999999999999996" y="37.20" width="1.4" height="0.7" fill="#c0504d" opacity="0.8"/><rect x="3.8" y="37.20" width="0.9" height="0.7" fill="#5b3f8c" opacity="0.8"/><rect x="8.87" y="22.64" width="3.2" height="14.86" fill="url(#g6)"/><rect x="17.81" y="13.39" width="3.2" height="24.11" fill="url(#g6)"/><rect x="26.74" y="10.86" width="3.2" height="26.64" fill="url(#g6)"/><rect x="35.68" y="18.83" width="3.2" height="18.67" fill="url(#g6)"/><rect x="44.62" y="24.63" width="3.2" height="12.87" fill="url(#g6)"/><rect x="53.56" y="27.35" width="3.2" height="10.15" fill="url(#g6)"/><rect x="62.49" y="30.43" width="3.2" height="7.07" fill="url(#g6)"/><rect x="71.43" y="32.61" width="3.2" height="4.89" fill="url(#g6)"/><text x="10.47" y="41.3" font-size="2.3" font-weight="bold" text-anchor="middle" fill="#222" font-family="Liberation Sans,sans-serif">Five</text><text x="19.41" y="41.3" font-size="2.3" font-weight="bold" text-anchor="middle" fill="#222" font-family="Liberation Sans,sans-serif">Six</text><text x="28.34" y="41.3" font-size="2.3" font-weight="bold" text-anchor="middle" fill="#222" font-family="Liberation Sans,sans-serif">Seven</text><text x="37.28" y="41.3" font-size="2.3" font-weight="bold" text-anchor="middle" fill="#222" font-family="Liberation Sans,sans-serif">Eight</text><text x="46.22" y="41.3" font-size="2.3" font-weight="bold" text-anchor="middle" fill="#222" font-family="Liberation Sans,sans-serif">Nine</text><text x="55.16" y="41.3" font-size="2.3" font-weight="bold" text-anchor="middle" fill="#222" font-family="Liberation Sans,sans-serif">Ten</text><text x="64.09" y="41.3" font-size="2.3" font-weight="bold" text-anchor="middle" fill="#222" font-family="Liberation Sans,sans-serif">Eleven</text><text x="73.03" y="41.3" font-size="2.3" font-weight="bold" text-anchor="middle" fill="#222" font-family="Liberation Sans,sans-serif">Twelve</text><rect x="16.8" y="44.0" width="1" height="1" fill="#4a7ebb"/><text x="18.4" y="45.3" font-size="1.9" font-weight="bold" fill="#222" font-family="Liberation Sans,sans-serif">Number of Shoes Sold</text><rect x="39.6" y="44.0" width="1" height="1" fill="#c0504d"/><text x="41.2" y="45.3" font-size="1.9" font-weight="bold" fill="#222" font-family="Liberation Sans,sans-serif">Percent of Nike Shoes Sold</text></svg>
<svg style="left:702px;top:40px;will-change:transform" width="80" height="48" viewBox="0 0 80 48"><rect x="0.5" y="0.5" width="79" height="47" fill="#fff" stroke="#d0d0d0"/><text x="40" y="4.5" font-size="3.0" font-weight="bold" text-anchor="middle" fill="#111" font-family="Liberation Sans,sans-serif">Chart Title</text><rect x="6" y="8.4" width="71.7" height="29.0" fill="#f2f2f2"/><rect x="6" y="8.15" width="71.7" height="0.5" fill="#c8c8c8"/><rect x="6" y="11.78" width="71.7" height="0.5" fill="#c8c8c8"/><rect x="6" y="15.40" width="71.7" height="0.5" fill="#c8c8c8"/><rect x="6" y="19.02" width="71.7" height="0.5" fill="#c8c8c8"/><rect x="6" y="22.65" width="71.7" height="0.5" fill="#c8c8c8"/><rect x="6" y="26.27" width="71.7" height="0.5" fill="#c8c8c8"/><rect x="6" y="29.90" width="71.7" height="0.5" fill="#c8c8c8"/><rect x="6" y="33.52" width="71.7" height="0.5" fill="#c8c8c8"/><rect x="6" y="37.15" width="71.7" height="0.5" fill="#c8c8c8"/><rect x="5.75" y="8.4" width="0.5" height="29.0" fill="#c8c8c8"/><rect x="14.71" y="8.4" width="0.5" height="29.0" fill="#c8c8c8"/><rect x="23.68" y="8.4" width="0.5" height="29.0" fill="#c8c8c8"/><rect x="32.64" y="8.4" width="0.5" height="29.0" fill="#c8c8c8"/><rect x="41.60" y="8.4" width="0.5" height="29.0" fill="#c8c8c8"/><rect x="50.56" y="8.4" width="0.5" height="29.0" fill="#c8c8c8"/><rect x="59.53" y="8.4" width="0.5" height="29.0" fill="#c8c8c8"/><rect x="68.49" y="8.4" width="0.5" height="29.0" fill="#c8c8c8"/><rect x="77.45" y="8.4" width="0.5" height="29.0" fill="#c8c8c8"/><rect x="1.5999999999999996" y="8.10" width="1.4" height="0.7" fill="#e9a23b" opacity="0.8"/><rect x="3.8" y="8.10" width="0.9" height="0.7" fill="#5b3f8c" opacity="0.8"/><rect x="1.5999999999999996" y="11.72" width="1.4" height="0.7" fill="#e9a23b" opacity="0.8"/><rect x="3.8" y="11.72" width="0.9" height="0.7" fill="#5b3f8c" opacity="0.8"/><rect x="1.5999999999999996" y="15.35" width="1.4" height="0.7" fill="#e9a23b" opacity="0.8"/><rect x="3.8" y="15.35" width="0.9" height="0.7" fill="#5b3f8c" opacity="0.8"/><rect x="1.5999999999999996" y="18.97" width="1.4" height="0.7" fill="#e9a23b" opacity="0.8"/><rect x="3.8" y="18.97" width="0.9" height="0.7" fill="#5b3f8c" opacity="0.8"/><rect x="1.5999999999999996" y="22.60" width="1.4" height="0.7" fill="#c0504d" opacity="0.8"/><rect x="1.5999999999999996" y="26.22" width="1.4" height="0.7" fill="#c0504d" opacity="0.8"/><rect x="1.5999999999999996" y="29.85" width="1.4" height="0.7" fill="#c0504d" opacity="0.8"/><rect x="1.5999999999999996" y="33.48" width="1.4" height="0.7" fill="#c0504d" opacity="0.8"/><rect x="1.5999999999999996" y="37.10" width="1.4" height="0.7" fill="#c0504d" opacity="0.8"/><rect x="3.8" y="37.10" width="0.9" height="0.7" fill="#5b3f8c" opacity="0.8"/><rect x="8.68" y="22.54" width="1.1" height="14.86" fill="#3f6fb5"/><rect x="17.64" y="13.29" width="1.1" height="24.11" fill="#3f6fb5"/><rect x="26.61" y="10.76" width="1.8" height="26.64" fill="#3f6fb5"/><rect x="35.57" y="18.73" width="1.8" height="18.67" fill="#3f6fb5"/><rect x="44.53" y="24.53" width="1.8" height="12.87" fill="#3f6fb5"/><rect x="53.49" y="27.25" width="1.8" height="10.15" fill="#3f6fb5"/><rect x="62.46" y="30.33" width="1.8" height="7.07" fill="#3f6fb5"/><rect x="71.42" y="32.51" width="1.8" height="4.89" fill="#3f6fb5"/><text x="10.48" y="41.099999999999994" font-size="2.3" font-weight="bold" text-anchor="middle" fill="#222" font-family="Liberation Sans,sans-serif">Five</text><text x="19.44" y="41.099999999999994" font-size="2.3" font-weight="bold" text-anchor="middle" fill="#222" font-family="Liberation Sans,sans-serif">Six</text><text x="28.41" y="41.099999999999994" font-size="2.3" font-weight="bold" text-anchor="middle" fill="#222" font-family="Liberation Sans,sans-serif">Seven</text><text x="37.37" y="41.099999999999994" font-size="2.3" font-weight="bold" text-anchor="middle" fill="#222" font-family="Liberation Sans,sans-serif">Eight</text><text x="46.33" y="41.099999999999994" font-size="2.3" font-weight="bold" text-anchor="middle" fill="#222" font-family="Liberation Sans,sans-serif">Nine</text><text x="55.29" y="41.099999999999994" font-size="2.3" font-weight="bold" text-anchor="middle" fill="#222" font-family="Liberation Sans,sans-serif">Ten</text><text x="64.26" y="41.099999999999994" font-size="2.3" font-weight="bold" text-anchor="middle" fill="#222" font-family="Liberation Sans,sans-serif">Eleven</text><text x="73.22" y="41.099999999999994" font-size="2.3" font-weight="bold" text-anchor="middle" fill="#222" font-family="Liberation Sans,sans-serif">Twelve</text><rect x="16.8" y="43.8" width="1" height="1" fill="#4a7ebb"/><text x="18.4" y="45.099999999999994" font-size="1.9" font-weight="bold" fill="#222" font-family="Liberation Sans,sans-serif">Number of Shoes Sold</text><rect x="39.6" y="43.8" width="1" height="1" fill="#c0504d"/><text x="41.2" y="45.099999999999994" font-size="1.9" font-weight="bold" fill="#222" font-family="Liberation Sans,sans-serif">Percent of Nike Shoes Sold</text></svg>
<svg style="left:790px;top:40px;will-change:transform" width="80" height="48" viewBox="0 0 80 48"><defs><linearGradient id="g8b" x1="0" y1="0" x2="1" y2="0"><stop offset="0" stop-color="#3c6db5"/><stop offset="0.5" stop-color="#7fb0f0"/><stop offset="1" stop-color="#3c6db5"/></linearGradient></defs><defs><radialGradient id="g8" cx="0.5" cy="0.45" r="0.75"><stop offset="0" stop-color="#555"/><stop offset="1" stop-color="#1e1e1e"/></radialGradient></defs><rect width="80" height="48" fill="url(#g8)"/><text x="40" y="4.5" font-size="3.0" font-weight="bold" text-anchor="middle" fill="#fff" font-family="Liberation Sans,sans-serif">Chart Title</text><rect x="6" y="8.20" width="72" height="0.45" fill="#6a6a6a"/><rect x="6" y="11.85" width="72" height="0.45" fill="#6a6a6a"/><rect x="6" y="15.50" width="72" height="0.45" fill="#6a6a6a"/><rect x="6" y="19.15" width="72" height="0.45" fill="#6a6a6a"/><rect x="6" y="22.80" width="72" height="0.45" fill="#6a6a6a"/><rect x="6" y="26.45" width="72" height="0.45" fill="#6a6a6a"/><rect x="6" y="30.10" width="72" height="0.45" fill="#6a6a6a"/><rect x="6" y="33.75" width="72" height="0.45" fill="#6a6a6a"/><rect x="6" y="37.40" width="72" height="0.45" fill="#6a6a6a"/><rect x="6" y="37.300000000000004" width="72" height="0.8" fill="#bbb"/><rect x="1.5999999999999996" y="8.10" width="1.4" height="0.7" fill="#5fa0e6" opacity="0.8"/><rect x="3.8" y="8.10" width="0.9" height="0.7" fill="#5b3f8c" opacity="0.8"/><rect x="1.5999999999999996" y="11.75" width="1.4" height="0.7" fill="#5fa0e6" opacity="0.8"/><rect x="3.8" y="11.75" width="0.9" height="0.7" fill="#5b3f8c" opacity="0.8"/><rect x="1.5999999999999996" y="15.40" width="1.4" height="0.7" fill="#5fa0e6" opacity="0.8"/><rect x="3.8" y="15.40" width="0.9" height="0.7" fill="#5b3f8c" opacity="0.8"/><rect x="1.5999999999999996" y="19.05" width="1.4" height="0.7" fill="#5fa0e6" opacity="0.8"/><rect x="3.8" y="19.05" width="0.9" height="0.7" fill="#5b3f8c" opacity="0.8"/><rect x="1.5999999999999996" y="22.70" width="1.4" height="0.7" fill="#5fa0e6" opacity="0.8"/><rect x="1.5999999999999996" y="26.35" width="1.4" height="0.7" fill="#5fa0e6" opacity="0.8"/><rect x="1.5999999999999996" y="30.00" width="1.4" height="0.7" fill="#5fa0e6" opacity="0.8"/><rect x="1.5999999999999996" y="33.65" width="1.4" height="0.7" fill="#5fa0e6" opacity="0.8"/><rect x="1.5999999999999996" y="37.30" width="1.4" height="0.7" fill="#5fa0e6" opacity="0.8"/><rect x="3.8" y="37.30" width="0.9" height="0.7" fill="#5b3f8c" opacity="0.8"/><rect x="9.00" y="22.64" width="2.2" height="14.96" fill="url(#g8b)"/><rect x="18.00" y="13.33" width="2.2" height="24.27" fill="url(#g8b)"/><rect x="27.00" y="10.77" width="2.2" height="26.83" fill="url(#g8b)"/><rect x="36.00" y="18.80" width="2.2" height="18.80" fill="url(#g8b)"/><rect x="45.00" y="24.64" width="2.2" height="12.96" fill="url(#g8b)"/><rect x="54.00" y="27.38" width="2.2" height="10.22" fill="url(#g8b)"/><rect x="63.00" y="30.48" width="2.2" height="7.12" fill="url(#g8b)"/><rect x="72.00" y="32.67" width="2.2" height="4.93" fill="url(#g8b)"/><text x="10.50" y="41.099999999999994" font-size="2.3" font-weight="bold" text-anchor="middle" fill="#eee" font-family="Liberation Sans,sans-serif">Five</text><text x="19.50" y="41.099999999999994" font-size="2.3" font-weight="bold" text-anchor="middle" fill="#eee" font-family="Liberation Sans,sans-serif">Six</text><text x="28.50" y="41.099999999999994" font-size="2.3" font-weight="bold" text-anchor="middle" fill="#eee" font-family="Liberation Sans,sans-serif">Seven</text><text x="37.50" y="41.099999999999994" font-size="2.3" font-weight="bold" text-anchor="middle" fill="#eee" font-family="Liberation Sans,sans-serif">Eight</text><text x="46.50" y="41.099999999999994" font-size="2.3" font-weight="bold" text-anchor="middle" fill="#eee" font-family="Liberation Sans,sans-serif">Nine</text><text x="55.50" y="41.099999999999994" font-size="2.3" font-weight="bold" text-anchor="middle" fill="#eee" font-family="Liberation Sans,sans-serif">Ten</text><text x="64.50" y="41.099999999999994" font-size="2.3" font-weight="bold" text-anchor="middle" fill="#eee" font-family="Liberation Sans,sans-serif">Eleven</text><text x="73.50" y="41.099999999999994" font-size="2.3" font-weight="bold" text-anchor="middle" fill="#eee" font-family="Liberation Sans,sans-serif">Twelve</text><rect x="16.8" y="43.9" width="1" height="1" fill="#4a7ebb"/><text x="18.4" y="45.199999999999996" font-size="1.9" font-weight="bold" fill="#eee" font-family="Liberation Sans,sans-serif">Number of Shoes Sold</text><rect x="39.6" y="43.9" width="1" height="1" fill="#c0504d"/><text x="41.2" y="45.199999999999996" font-size="1.9" font-weight="bold" fill="#eee" font-family="Liberation Sans,sans-serif">Percent of Nike Shoes Sold</text></svg>
<div class="a" style="left:5px;top:131px;width:102px;height:26px;background:#fff;border:1px solid #c6c6c6;"></div>
<span class="t" style="left:12.30px;top:137.00px;font-size:13px;line-height:15px;color:#444;transform:scaleX(0.9899);">Chart 1</span>
<svg style="left:93px;top:141px" width="8" height="4"><path d="M0.3 0.2h7l-3.5 3.3z" fill="#777"/></svg>
<div class="a" style="left:121.5px;top:140px;width:1.3px;height:1.3px;background:#9a9a9a;"></div>
<div class="a" style="left:121.5px;top:144px;width:1.3px;height:1.3px;background:#9a9a9a;"></div>
<div class="a" style="left:121.5px;top:148px;width:1.3px;height:1.3px;background:#9a9a9a;"></div>
<div class="a" style="left:137px;top:131px;width:110px;height:26px;background:#fff;border:1px solid #c6c6c6;"></div>
<svg style="left:146px;top:135px" width="20" height="19"><path d="M2.2 2.2C7 5.5 13 11 17.6 16.6" stroke="#c9c9c9" stroke-width="1.7" fill="none"/><path d="M17.8 2.2C12 5 6 10.5 2 16.2" stroke="#c9c9c9" stroke-width="2.8" fill="none"/></svg>
<svg style="left:182px;top:135px" width="22" height="19"><path d="M1 9.8l2.6-2.3 4.6 4.6L19.3 1.2l1.2 1.2L9 17.8z" fill="#c9c9c9"/></svg>
<span class="t" style="left:217.50px;top:128.00px;font-size:24px;line-height:27px;color:#7a7a7a;font-weight:bold;font-style:italic;font-family:'Liberation Serif',serif;transform:scaleX(1.3000);">f</span>
<span class="t" style="left:227.30px;top:134.00px;font-size:19px;line-height:21px;color:#7a7a7a;font-weight:bold;font-style:italic;font-family:'Liberation Serif',serif;">x</span>
<div class="a" style="left:250px;top:131px;width:1111px;height:26px;background:#fff;border:1px solid #c6c6c6;"></div>
<span class="t" style="left:262.50px;top:137.00px;font-size:13px;line-height:15px;color:#222;transform:scaleX(0.8522);">=SERIES(</span>
<span class="t" style="left:314.00px;top:137.00px;font-size:13px;line-height:15px;color:#222;transform:scaleX(1.0331);">Sheet1!$A$3,</span>
<span class="t" style="left:396.80px;top:137.00px;font-size:13px;line-height:15px;color:#222;transform:scaleX(1.0083);">Sheet1!$B$1:$I$1,</span>
<span class="t" style="left:506.70px;top:137.00px;font-size:13px;line-height:15px;color:#222;transform:scaleX(1.0137);">Sheet1!$B$3:$I$3,2)</span>
<svg style="left:1346px;top:141px" width="14" height="10"><path d="M1.5 1.8l5 5 5-5" fill="none" stroke="#6a6a6a" stroke-width="2.6"/></svg>
<div class="a" style="left:0px;top:167px;width:1060px;height:20px;background:#fff;"></div>
<svg style="left:12px;top:171px" width="14" height="13"><path d="M13 0.5v12h-12.5z" fill="#d9d9d9"/></svg>
<div class="a" style="left:249px;top:188px;width:701px;height:20px;background:#f2eef8;"></div>
<div class="a" style="left:249px;top:230px;width:701px;height:20px;background:#edf2fb;"></div>
<div class="a" style="left:29px;top:230px;width:216px;height:20px;background:#fdeceb;"></div>
<div class="a" style="left:247px;top:167px;width:1px;height:431px;background:#d4d4d4;"></div>
<div class="a" style="left:335px;top:167px;width:1px;height:431px;background:#d4d4d4;"></div>
<div class="a" style="left:423px;top:167px;width:1px;height:431px;background:#d4d4d4;"></div>
<div class="a" style="left:511px;top:167px;width:1px;height:431px;background:#d4d4d4;"></div>
<div class="a" style="left:599px;top:167px;width:1px;height:431px;background:#d4d4d4;"></div>
<div class="a" style="left:687px;top:167px;width:1px;height:431px;background:#d4d4d4;"></div>
<div class="a" style="left:775px;top:167px;width:1px;height:431px;background:#d4d4d4;"></div>
<div class="a" style="left:863px;top:167px;width:1px;height:431px;background:#d4d4d4;"></div>
<div class="a" style="left:951px;top:167px;width:1px;height:431px;background:#d4d4d4;"></div>
<div class="a" style="left:1039px;top:167px;width:1px;height:431px;background:#d4d4d4;"></div>
<div class="a" style="left:28px;top:167px;width:1px;height:20px;background:#d4d4d4;"></div>
<div class="a" style="left:28px;top:187px;width:1px;height:411px;background:#9e9e9e;"></div>
<div class="a" style="left:0px;top:208px;width:1059px;height:1px;background:#d4d4d4;"></div>
<div class="a" style="left:0px;top:229px;width:1059px;height:1px;background:#d4d4d4;"></div>
<div class="a" style="left:0px;top:250px;width:1059px;height:1px;background:#d4d4d4;"></div>
<div class="a" style="left:0px;top:271px;width:1059px;height:1px;background:#d4d4d4;"></div>
<div class="a" style="left:0px;top:292px;width:1059px;height:1px;background:#d4d4d4;"></div>
<div class="a" style="left:0px;top:313px;width:1059px;height:1px;background:#d4d4d4;"></div>
<div class="a" style="left:0px;top:334px;width:1059px;height:1px;background:#d4d4d4;"></div>
<div class="a" style="left:0px;top:355px;width:1059px;height:1px;background:#d4d4d4;"></div>
<div class="a" style="left:0px;top:376px;width:1059px;height:1px;background:#d4d4d4;"></div>
<div class="a" style="left:0px;top:397px;width:1059px;height:1px;background:#d4d4d4;"></div>
<div class="a" style="left:0px;top:418px;width:1059px;height:1px;background:#d4d4d4;"></div>
<div class="a" style="left:0px;top:439px;width:1059px;height:1px;background:#d4d4d4;"></div>
<div class="a" style="left:0px;top:460px;width:1059px;height:1px;background:#d4d4d4;"></div>
<div class="a" style="left:0px;top:481px;width:1059px;height:1px;background:#d4d4d4;"></div>
<div class="a" style="left:0px;top:502px;width:1059px;height:1px;background:#d4d4d4;"></div>
<div class="a" style="left:0px;top:523px;width:1059px;height:1px;background:#d4d4d4;"></div>
<div class="a" style="left:0px;top:544px;width:1059px;height:1px;background:#d4d4d4;"></div>
<div class="a" style="left:0px;top:565px;width:1059px;height:1px;background:#d4d4d4;"></div>
<div class="a" style="left:0px;top:586px;width:1059px;height:1px;background:#d4d4d4;"></div>
<div class="a" style="left:0px;top:187px;width:28px;height:1px;background:#d4d4d4;"></div>
<div class="a" style="left:28px;top:187px;width:1031px;height:1px;background:#9e9e9e;"></div>
<span class="t" style="left:134.16px;top:171.00px;font-size:13px;line-height:15px;color:#444;">A</span>
<span class="t" style="left:287.16px;top:171.00px;font-size:13px;line-height:15px;color:#444;">B</span>
<span class="t" style="left:374.81px;top:171.00px;font-size:13px;line-height:15px;color:#444;">C</span>
<span class="t" style="left:462.81px;top:171.00px;font-size:13px;line-height:15px;color:#444;">D</span>
<span class="t" style="left:551.16px;top:171.00px;font-size:13px;line-height:15px;color:#444;">E</span>
<span class="t" style="left:639.53px;top:171.00px;font-size:13px;line-height:15px;color:#444;">F</span>
<span class="t" style="left:726.44px;top:171.00px;font-size:13px;line-height:15px;color:#444;">G</span>
<span class="t" style="left:814.81px;top:171.00px;font-size:13px;line-height:15px;color:#444;">H</span>
<span class="t" style="left:905.69px;top:171.00px;font-size:13px;line-height:15px;color:#444;">I</span>
<span class="t" style="left:992.25px;top:171.00px;font-size:13px;line-height:15px;color:#444;">J</span>
<span class="t" style="left:10.32px;top:191.60px;font-size:13.8px;line-height:15px;color:#444;transform:scaleX(0.9600);">1</span>
<span class="t" style="left:10.32px;top:212.60px;font-size:13.8px;line-height:15px;color:#444;transform:scaleX(0.9600);">2</span>
<span class="t" style="left:10.32px;top:233.60px;font-size:13.8px;line-height:15px;color:#444;transform:scaleX(0.9600);">3</span>
<span class="t" style="left:10.32px;top:254.60px;font-size:13.8px;line-height:15px;color:#444;transform:scaleX(0.9600);">4</span>
<span class="t" style="left:10.32px;top:275.60px;font-size:13.8px;line-height:15px;color:#444;transform:scaleX(0.9600);">5</span>
<span class="t" style="left:10.32px;top:296.60px;font-size:13.8px;line-height:15px;color:#444;transform:scaleX(0.9600);">6</span>
<span class="t" style="left:10.32px;top:317.60px;font-size:13.8px;line-height:15px;color:#444;transform:scaleX(0.9600);">7</span>
<span class="t" style="left:10.32px;top:338.60px;font-size:13.8px;line-height:15px;color:#444;transform:scaleX(0.9600);">8</span>
<span class="t" style="left:10.32px;top:359.60px;font-size:13.8px;line-height:15px;color:#444;transform:scaleX(0.9600);">9</span>
<span class="t" style="left:6.63px;top:380.60px;font-size:13.8px;line-height:15px;color:#444;transform:scaleX(0.9600);">10</span>
<span class="t" style="left:7.12px;top:401.60px;font-size:13.8px;line-height:15px;color:#444;transform:scaleX(0.9600);">11</span>
<span class="t" style="left:6.63px;top:422.60px;font-size:13.8px;line-height:15px;color:#444;transform:scaleX(0.9600);">12</span>
<span class="t" style="left:6.63px;top:443.60px;font-size:13.8px;line-height:15px;color:#444;transform:scaleX(0.9600);">13</span>
<span class="t" style="left:6.63px;top:464.60px;font-size:13.8px;line-height:15px;color:#444;transform:scaleX(0.9600);">14</span>
<span class="t" style="left:6.63px;top:485.60px;font-size:13.8px;line-height:15px;color:#444;transform:scaleX(0.9600);">15</span>
<span class="t" style="left:6.63px;top:506.60px;font-size:13.8px;line-height:15px;color:#444;transform:scaleX(0.9600);">16</span>
<span class="t" style="left:6.63px;top:527.60px;font-size:13.8px;line-height:15px;color:#444;transform:scaleX(0.9600);">17</span>
<span class="t" style="left:6.63px;top:548.60px;font-size:13.8px;line-height:15px;color:#444;transform:scaleX(0.9600);">18</span>
<span class="t" style="left:6.63px;top:569.60px;font-size:13.8px;line-height:15px;color:#444;transform:scaleX(0.9600);">19</span>
<span class="t" style="left:6.63px;top:590.60px;font-size:13.8px;line-height:15px;color:#444;transform:scaleX(0.9600);">20</span>
<div class="a" style="left:251px;top:207.8px;width:697px;height:2px;background:#8e63b8;"></div>
<div class="a" style="left:29px;top:228.2px;width:215px;height:2px;background:#e8505a;"></div>
<div class="a" style="left:29px;top:250px;width:215px;height:2px;background:#e8505a;"></div>
<div class="a" style="left:29px;top:227.2px;width:2px;height:4px;background:#e8505a;"></div>
<div class="a" style="left:29px;top:249px;width:2px;height:4px;background:#e8505a;"></div>
<div class="a" style="left:251px;top:228.2px;width:697px;height:2px;background:#5b8be0;"></div>
<div class="a" style="left:251px;top:250px;width:697px;height:2px;background:#5b8be0;"></div>
<div class="a" style="left:246.2px;top:233px;width:1.9px;height:14px;background:#5b8be0;"></div>
<div class="a" style="left:246.2px;top:191px;width:1.9px;height:14px;background:#8e63b8;"></div>
<div class="a" style="left:245px;top:188px;width:5px;height:2px;background:#8e63b8;"></div>
<div class="a" style="left:245px;top:206px;width:5px;height:5px;background:#8e63b8;"></div>
<div class="a" style="left:245px;top:227px;width:5px;height:5px;background:#5b8be0;"></div>
<div class="a" style="left:245px;top:248px;width:5px;height:5px;background:#5b8be0;"></div>
<div class="a" style="left:951px;top:191px;width:1.9px;height:14px;background:#8e63b8;"></div>
<div class="a" style="left:949px;top:188px;width:5px;height:2px;background:#8e63b8;"></div>
<div class="a" style="left:949px;top:206px;width:5px;height:5px;background:#8e63b8;"></div>
<div class="a" style="left:951px;top:233px;width:1.9px;height:14px;background:#5b8be0;"></div>
<div class="a" style="left:949px;top:227px;width:5px;height:5px;background:#5b8be0;"></div>
<div class="a" style="left:949px;top:248px;width:5px;height:5px;background:#5b8be0;"></div>
<span class="t" style="left:30.60px;top:191.90px;font-size:13.8px;line-height:15px;color:#111;transform:scaleX(0.9468);">Shoe Sizes</span>
<span class="t" style="left:30.40px;top:212.90px;font-size:13.8px;line-height:15px;color:#111;transform:scaleX(1.0061);">Number of Shoes Sold</span>
<span class="t" style="left:30.40px;top:233.90px;font-size:13.8px;line-height:15px;color:#111;transform:scaleX(1.0127);">Percent of Nike Shoes Sold</span>
<span class="t" style="left:250.40px;top:191.90px;font-size:13.8px;line-height:15px;color:#111;transform:scaleX(1.0080);">Five</span>
<span class="t" style="left:317.46px;top:212.90px;font-size:13.8px;line-height:15px;color:#111;">82</span>
<span class="t" style="left:306.24px;top:233.90px;font-size:13.8px;line-height:15px;color:#111;transform:scaleX(0.9688);">47%</span>
<span class="t" style="left:338.40px;top:191.90px;font-size:13.8px;line-height:15px;color:#111;transform:scaleX(1.0080);">Six</span>
<span class="t" style="left:397.79px;top:212.90px;font-size:13.8px;line-height:15px;color:#111;">133</span>
<span class="t" style="left:394.24px;top:233.90px;font-size:13.8px;line-height:15px;color:#111;transform:scaleX(0.9688);">43%</span>
<span class="t" style="left:426.40px;top:191.90px;font-size:13.8px;line-height:15px;color:#111;transform:scaleX(1.0080);">Seven</span>
<span class="t" style="left:485.79px;top:212.90px;font-size:13.8px;line-height:15px;color:#111;">147</span>
<span class="t" style="left:482.24px;top:233.90px;font-size:13.8px;line-height:15px;color:#111;transform:scaleX(0.9688);">32%</span>
<span class="t" style="left:514.40px;top:191.90px;font-size:13.8px;line-height:15px;color:#111;transform:scaleX(1.0080);">Eight</span>
<span class="t" style="left:573.79px;top:212.90px;font-size:13.8px;line-height:15px;color:#111;">103</span>
<span class="t" style="left:570.24px;top:233.90px;font-size:13.8px;line-height:15px;color:#111;transform:scaleX(0.9688);">48%</span>
<span class="t" style="left:602.40px;top:191.90px;font-size:13.8px;line-height:15px;color:#111;transform:scaleX(1.0080);">Nine</span>
<span class="t" style="left:669.46px;top:212.90px;font-size:13.8px;line-height:15px;color:#111;">71</span>
<span class="t" style="left:658.24px;top:233.90px;font-size:13.8px;line-height:15px;color:#111;transform:scaleX(0.9688);">55%</span>
<span class="t" style="left:690.40px;top:191.90px;font-size:13.8px;line-height:15px;color:#111;transform:scaleX(1.0080);">Ten</span>
<span class="t" style="left:757.46px;top:212.90px;font-size:13.8px;line-height:15px;color:#111;">56</span>
<span class="t" style="left:746.24px;top:233.90px;font-size:13.8px;line-height:15px;color:#111;transform:scaleX(0.9688);">66%</span>
<span class="t" style="left:778.40px;top:191.90px;font-size:13.8px;line-height:15px;color:#111;transform:scaleX(1.0080);">Eleven</span>
<span class="t" style="left:845.46px;top:212.90px;font-size:13.8px;line-height:15px;color:#111;">39</span>
<span class="t" style="left:834.24px;top:233.90px;font-size:13.8px;line-height:15px;color:#111;transform:scaleX(0.9688);">74%</span>
<span class="t" style="left:866.40px;top:191.90px;font-size:13.8px;line-height:15px;color:#111;transform:scaleX(1.0080);">Twelve</span>
<span class="t" style="left:933.46px;top:212.90px;font-size:13.8px;line-height:15px;color:#111;">27</span>
<span class="t" style="left:922.24px;top:233.90px;font-size:13.8px;line-height:15px;color:#111;transform:scaleX(0.9688);">82%</span>
<div class="a" style="left:458px;top:285px;width:486px;height:294px;background:#fff;border:1px solid #b9b9b9;"></div>
<div class="a" style="left:461px;top:288px;width:480px;height:288px;background:#fff;border:1px solid #dadada;"></div>
<svg style="left:0;top:0;will-change:transform" width="1366" height="598" viewBox="0 0 1366 598" font-family="Liberation Sans,sans-serif"><rect x="498.0" y="513.50" width="401.20000000000005" height="1" fill="#d9d9d9"/><rect x="498.0" y="491.31" width="401.20000000000005" height="1" fill="#d9d9d9"/><rect x="498.0" y="469.12" width="401.20000000000005" height="1" fill="#d9d9d9"/><rect x="498.0" y="446.94" width="401.20000000000005" height="1" fill="#d9d9d9"/><rect x="498.0" y="424.75" width="401.20000000000005" height="1" fill="#d9d9d9"/><rect x="498.0" y="402.56" width="401.20000000000005" height="1" fill="#d9d9d9"/><rect x="498.0" y="380.38" width="401.20000000000005" height="1" fill="#d9d9d9"/><rect x="498.0" y="358.19" width="401.20000000000005" height="1" fill="#d9d9d9"/><rect x="498.0" y="336.00" width="401.20000000000005" height="1" fill="#d9d9d9"/><rect x="515.08" y="423.03" width="16" height="90.97" fill="#4f81bd"/><rect x="565.23" y="366.45" width="16" height="147.55" fill="#4f81bd"/><rect x="615.38" y="350.92" width="16" height="163.08" fill="#4f81bd"/><rect x="665.53" y="399.73" width="16" height="114.27" fill="#4f81bd"/><rect x="715.67" y="435.23" width="16" height="78.77" fill="#4f81bd"/><rect x="765.83" y="451.88" width="16" height="62.12" fill="#4f81bd"/><rect x="815.98" y="470.73" width="16" height="43.27" fill="#4f81bd"/><rect x="866.12" y="484.05" width="16" height="29.95" fill="#4f81bd"/><rect x="515.08" y="421.31" width="16" height="92.69" fill="#c0504d" stroke="#8794a8" stroke-width="0.9"/><rect x="565.23" y="429.19" width="16" height="84.81" fill="#c0504d" stroke="#8794a8" stroke-width="0.9"/><rect x="615.38" y="450.89" width="16" height="63.11" fill="#c0504d" stroke="#8794a8" stroke-width="0.9"/><rect x="665.53" y="419.33" width="16" height="94.67" fill="#c0504d" stroke="#8794a8" stroke-width="0.9"/><rect x="715.67" y="405.53" width="16" height="108.47" fill="#c0504d" stroke="#8794a8" stroke-width="0.9"/><rect x="765.83" y="383.83" width="16" height="130.17" fill="#c0504d" stroke="#8794a8" stroke-width="0.9"/><rect x="815.98" y="368.06" width="16" height="145.94" fill="#c0504d" stroke="#8794a8" stroke-width="0.9"/><rect x="866.12" y="352.28" width="16" height="161.72" fill="#c0504d" stroke="#8794a8" stroke-width="0.9"/><circle cx="515.08" cy="421.31" r="2.8" fill="#e1f1f6" stroke="#4f7fb8" stroke-width="1"/><circle cx="531.08" cy="421.31" r="2.8" fill="#e1f1f6" stroke="#4f7fb8" stroke-width="1"/><circle cx="515.08" cy="514.00" r="2.8" fill="#e1f1f6" stroke="#4f7fb8" stroke-width="1"/><circle cx="531.08" cy="514.00" r="2.8" fill="#e1f1f6" stroke="#4f7fb8" stroke-width="1"/><circle cx="565.23" cy="429.19" r="2.8" fill="#e1f1f6" stroke="#4f7fb8" stroke-width="1"/><circle cx="581.23" cy="429.19" r="2.8" fill="#e1f1f6" stroke="#4f7fb8" stroke-width="1"/><circle cx="565.23" cy="514.00" r="2.8" fill="#e1f1f6" stroke="#4f7fb8" stroke-width="1"/><circle cx="581.23" cy="514.00" r="2.8" fill="#e1f1f6" stroke="#4f7fb8" stroke-width="1"/><circle cx="615.38" cy="450.89" r="2.8" fill="#e1f1f6" stroke="#4f7fb8" stroke-width="1"/><circle cx="631.38" cy="450.89" r="2.8" fill="#e1f1f6" stroke="#4f7fb8" stroke-width="1"/><circle cx="615.38" cy="514.00" r="2.8" fill="#e1f1f6" stroke="#4f7fb8" stroke-width="1"/><circle cx="631.38" cy="514.00" r="2.8" fill="#e1f1f6" stroke="#4f7fb8" stroke-width="1"/><circle cx="665.53" cy="419.33" r="2.8" fill="#e1f1f6" stroke="#4f7fb8" stroke-width="1"/><circle cx="681.53" cy="419.33" r="2.8" fill="#e1f1f6" stroke="#4f7fb8" stroke-width="1"/><circle cx="665.53" cy="514.00" r="2.8" fill="#e1f1f6" stroke="#4f7fb8" stroke-width="1"/><circle cx="681.53" cy="514.00" r="2.8" fill="#e1f1f6" stroke="#4f7fb8" stroke-width="1"/><circle cx="715.67" cy="405.53" r="2.8" fill="#e1f1f6" stroke="#4f7fb8" stroke-width="1"/><circle cx="731.67" cy="405.53" r="2.8" fill="#e1f1f6" stroke="#4f7fb8" stroke-width="1"/><circle cx="715.67" cy="514.00" r="2.8" fill="#e1f1f6" stroke="#4f7fb8" stroke-width="1"/><circle cx="731.67" cy="514.00" r="2.8" fill="#e1f1f6" stroke="#4f7fb8" stroke-width="1"/><circle cx="765.83" cy="383.83" r="2.8" fill="#e1f1f6" stroke="#4f7fb8" stroke-width="1"/><circle cx="781.83" cy="383.83" r="2.8" fill="#e1f1f6" stroke="#4f7fb8" stroke-width="1"/><circle cx="765.83" cy="514.00" r="2.8" fill="#e1f1f6" stroke="#4f7fb8" stroke-width="1"/><circle cx="781.83" cy="514.00" r="2.8" fill="#e1f1f6" stroke="#4f7fb8" stroke-width="1"/><circle cx="815.98" cy="368.06" r="2.8" fill="#e1f1f6" stroke="#4f7fb8" stroke-width="1"/><circle cx="831.98" cy="368.06" r="2.8" fill="#e1f1f6" stroke="#4f7fb8" stroke-width="1"/><circle cx="815.98" cy="514.00" r="2.8" fill="#e1f1f6" stroke="#4f7fb8" stroke-width="1"/><circle cx="831.98" cy="514.00" r="2.8" fill="#e1f1f6" stroke="#4f7fb8" stroke-width="1"/><circle cx="866.12" cy="352.28" r="2.8" fill="#e1f1f6" stroke="#4f7fb8" stroke-width="1"/><circle cx="882.12" cy="352.28" r="2.8" fill="#e1f1f6" stroke="#4f7fb8" stroke-width="1"/><circle cx="866.12" cy="514.00" r="2.8" fill="#e1f1f6" stroke="#4f7fb8" stroke-width="1"/><circle cx="882.12" cy="514.00" r="2.8" fill="#e1f1f6" stroke="#4f7fb8" stroke-width="1"/><text x="486.8" y="517.2" font-size="10.8" text-anchor="end" fill="#595959" font-weight="normal" textLength="5.9" lengthAdjust="spacingAndGlyphs">0</text><text x="486.8" y="495.0" font-size="10.8" text-anchor="end" fill="#595959" font-weight="normal" textLength="11.7" lengthAdjust="spacingAndGlyphs">20</text><text x="486.8" y="472.8" font-size="10.8" text-anchor="end" fill="#595959" font-weight="normal" textLength="11.7" lengthAdjust="spacingAndGlyphs">40</text><text x="486.8" y="450.6" font-size="10.8" text-anchor="end" fill="#595959" font-weight="normal" textLength="11.7" lengthAdjust="spacingAndGlyphs">60</text><text x="486.8" y="428.4" font-size="10.8" text-anchor="end" fill="#595959" font-weight="normal" textLength="11.7" lengthAdjust="spacingAndGlyphs">80</text><text x="486.8" y="406.3" font-size="10.8" text-anchor="end" fill="#595959" font-weight="normal" textLength="17.6" lengthAdjust="spacingAndGlyphs">100</text><text x="486.8" y="384.1" font-size="10.8" text-anchor="end" fill="#595959" font-weight="normal" textLength="17.6" lengthAdjust="spacingAndGlyphs">120</text><text x="486.8" y="361.9" font-size="10.8" text-anchor="end" fill="#595959" font-weight="normal" textLength="17.6" lengthAdjust="spacingAndGlyphs">140</text><text x="486.8" y="339.7" font-size="10.8" text-anchor="end" fill="#595959" font-weight="normal" textLength="17.6" lengthAdjust="spacingAndGlyphs">160</text><text x="911.3" y="517.2" font-size="10.8" text-anchor="start" fill="#595959" font-weight="normal" textLength="14.1" lengthAdjust="spacingAndGlyphs">0%</text><text x="911.3" y="497.5" font-size="10.8" text-anchor="start" fill="#595959" font-weight="normal" textLength="19.5" lengthAdjust="spacingAndGlyphs">10%</text><text x="911.3" y="477.8" font-size="10.8" text-anchor="start" fill="#595959" font-weight="normal" textLength="19.5" lengthAdjust="spacingAndGlyphs">20%</text><text x="911.3" y="458.0" font-size="10.8" text-anchor="start" fill="#595959" font-weight="normal" textLength="19.5" lengthAdjust="spacingAndGlyphs">30%</text><text x="911.3" y="438.3" font-size="10.8" text-anchor="start" fill="#595959" font-weight="normal" textLength="19.5" lengthAdjust="spacingAndGlyphs">40%</text><text x="911.3" y="418.6" font-size="10.8" text-anchor="start" fill="#595959" font-weight="normal" textLength="19.5" lengthAdjust="spacingAndGlyphs">50%</text><text x="911.3" y="398.9" font-size="10.8" text-anchor="start" fill="#595959" font-weight="normal" textLength="19.5" lengthAdjust="spacingAndGlyphs">60%</text><text x="911.3" y="379.1" font-size="10.8" text-anchor="start" fill="#595959" font-weight="normal" textLength="19.5" lengthAdjust="spacingAndGlyphs">70%</text><text x="911.3" y="359.4" font-size="10.8" text-anchor="start" fill="#595959" font-weight="normal" textLength="19.5" lengthAdjust="spacingAndGlyphs">80%</text><text x="911.3" y="339.7" font-size="10.8" text-anchor="start" fill="#595959" font-weight="normal" textLength="19.5" lengthAdjust="spacingAndGlyphs">90%</text><text x="523.3" y="532.8" font-size="10.8" text-anchor="middle" fill="#595959" font-weight="normal" textLength="19.7" lengthAdjust="spacingAndGlyphs">Five</text><text x="573.4" y="532.8" font-size="10.8" text-anchor="middle" fill="#595959" font-weight="normal" textLength="14.5" lengthAdjust="spacingAndGlyphs">Six</text><text x="623.6" y="532.8" font-size="10.8" text-anchor="middle" fill="#595959" font-weight="normal" textLength="29.6" lengthAdjust="spacingAndGlyphs">Seven</text><text x="673.7" y="532.8" font-size="10.8" text-anchor="middle" fill="#595959" font-weight="normal" textLength="23.8" lengthAdjust="spacingAndGlyphs">Eight</text><text x="723.9" y="532.8" font-size="10.8" text-anchor="middle" fill="#595959" font-weight="normal" textLength="21.5" lengthAdjust="spacingAndGlyphs">Nine</text><text x="774.0" y="532.8" font-size="10.8" text-anchor="middle" fill="#595959" font-weight="normal" textLength="16.8" lengthAdjust="spacingAndGlyphs">Ten</text><text x="824.2" y="532.8" font-size="10.8" text-anchor="middle" fill="#595959" font-weight="normal" textLength="32.0" lengthAdjust="spacingAndGlyphs">Eleven</text><text x="874.3" y="532.8" font-size="10.8" text-anchor="middle" fill="#595959" font-weight="normal" textLength="32.5" lengthAdjust="spacingAndGlyphs">Twelve</text><text x="700" y="316.2" font-size="18" text-anchor="middle" fill="#595959" font-weight="normal" textLength="79.0" lengthAdjust="spacingAndGlyphs">Chart Title</text><rect x="563.5" y="553" width="6" height="6" fill="#4f81bd"/><text x="573.3" y="558.7" font-size="11" text-anchor="start" fill="#595959" font-weight="normal" textLength="107.0" lengthAdjust="spacingAndGlyphs">Number of Shoes Sold</text><rect x="702.3" y="553" width="6" height="6" fill="#c0504d"/><text x="711.8" y="558.7" font-size="11" text-anchor="start" fill="#595959" font-weight="normal" textLength="129.2" lengthAdjust="spacingAndGlyphs">Percent of Nike Shoes Sold</text></svg>
<div class="a" style="left:456px;top:283px;width:8px;height:8px;background:#fff;border:1px solid #b9b9b9;border-radius:1.5px;"></div>
<div class="a" style="left:697px;top:283px;width:8px;height:8px;background:#fff;border:1px solid #b9b9b9;border-radius:1.5px;"></div>
<div class="a" style="left:938px;top:283px;width:8px;height:8px;background:#fff;border:1px solid #b9b9b9;border-radius:1.5px;"></div>
<div class="a" style="left:456px;top:428px;width:8px;height:8px;background:#fff;border:1px solid #b9b9b9;border-radius:1.5px;"></div>
<div class="a" style="left:938px;top:428px;width:8px;height:8px;background:#fff;border:1px solid #b9b9b9;border-radius:1.5px;"></div>
<div class="a" style="left:456px;top:573px;width:8px;height:8px;background:#fff;border:1px solid #b9b9b9;border-radius:1.5px;"></div>
<div class="a" style="left:697px;top:573px;width:8px;height:8px;background:#fff;border:1px solid #b9b9b9;border-radius:1.5px;"></div>
<div class="a" style="left:938px;top:573px;width:8px;height:8px;background:#fff;border:1px solid #b9b9b9;border-radius:1.5px;"></div>
<div class="a" style="left:953px;top:287px;width:28px;height:28px;background:#fff;border:1px solid #ababab;"></div>
<div class="a" style="left:953px;top:325px;width:28px;height:28px;background:#fff;border:1px solid #ababab;"></div>
<div class="a" style="left:953px;top:363px;width:28px;height:28px;background:#fff;border:1px solid #ababab;"></div>
<svg style="left:953px;top:287px" width="28" height="28"><path d="M11.9 6.6h4.400v4.900h4.900v4.400h-4.900v4.900h-4.400v-4.900h-4.900v-4.400h4.900z" fill="#5fa487"/></svg>
<svg style="left:953px;top:325px" width="28" height="28">
<path d="M23.4 4.600l-7.600 8.400 1.900 1.900 6.500-9.200z" fill="#6e6e6e"/>
<path d="M15.200 13.600l2.300 2.300-1.900 1.500-1.900-1.900z" fill="#5a5a5a"/>
<path d="M13.300 15.300c1.500 0.300 2.300 1.300 2.100 2.700-0.800 3.200-5.500 4.100-10.600 3.300 3.800-1 4.800-5.800 8.500-6z" fill="#4a7ebb"/>
<path d="M11.500 17.200c1-0.600 2.200-0.200 2.300 0.900-0.300 1.200-1.700 1.600-2.700 1.300z" fill="#dfeaf6"/></svg>
<svg style="left:953px;top:363px" width="28" height="28">
<path d="M5 6.300h18.200l-6.700 7.300v8.200h-4.800v-8.200z" fill="#7f7f7f"/>
<path d="M12.900 14.200h2.400v6.400h-2.400z" fill="#fff"/></svg>
<div class="a" style="left:1059px;top:167px;width:1px;height:431px;background:#b4b4b4;"></div>
<div class="a" style="left:1063px;top:167px;width:1px;height:431px;background:#b8b8b8;"></div>
<div class="a" style="left:1064px;top:167px;width:13px;height:431px;background:#fff;"></div>
<div class="a" style="left:1077px;top:167px;width:1px;height:431px;background:#b0b0b0;"></div>
<div class="a" style="left:1078px;top:167px;width:288px;height:431px;background:#fff;"></div>
<div class="a" style="left:1081px;top:167px;width:1px;height:431px;background:#dcdcdc;"></div>
<svg style="left:1343px;top:185px" width="11" height="11"><path d="M0.5 0.5l9.5 9.5M10 0.5l-9.5 9.5" stroke="#555" stroke-width="1.9" fill="none"/></svg>
<svg style="left:1102px;top:298px" width="7" height="7"><path d="M6.5 0.5v6h-6z" fill="#444"/></svg>
<span class="t" style="left:1116.90px;top:296.70px;font-size:12px;line-height:14px;color:#217346;font-weight:bold;transform:scaleX(0.9156);">SERIES OPTIONS</span>
<span class="t" style="left:1117.00px;top:318.80px;font-size:12px;line-height:14px;color:#444;transform:scaleX(0.9384);">Plot Series On</span>
<svg style="left:1127px;top:348px" width="13" height="13"><circle cx="6.5" cy="6.3" r="5.4" fill="#fff" stroke="#9a9a9a"/></svg>
<span class="t" style="left:1145.20px;top:348.20px;font-size:12px;line-height:14px;color:#444;transform:scaleX(0.9674);"><u>P</u>rimary Axis</span>
<svg style="left:1127px;top:370px" width="13" height="13"><circle cx="6.5" cy="6.3" r="5.4" fill="#fff" stroke="#9a9a9a"/><circle cx="6.5" cy="6.3" r="3" fill="#666"/></svg>
<span class="t" style="left:1145.20px;top:369.90px;font-size:12px;line-height:14px;color:#444;transform:scaleX(0.9527);"><u>S</u>econdary Axis</span>
<span class="t" style="left:1117.00px;top:396.00px;font-size:12px;line-height:14px;color:#444;transform:scaleX(0.9311);">Series <u>O</u>verlap</span>
<span class="t" style="left:1117.00px;top:422.60px;font-size:12px;line-height:14px;color:#444;transform:scaleX(0.9790);">Gap <u>W</u>idth</span>
<div class="a" style="left:1201px;top:400.5px;width:52px;height:1px;background:#a8a8a8;"></div>
<div class="a" style="left:1220px;top:400.3px;width:5px;height:2px;background:#6a6a6a;"></div>
<div class="a" style="left:1219.5px;top:397px;width:2px;height:9px;background:#666;"></div>
<div class="a" style="left:1201px;top:427.5px;width:52px;height:1px;background:#b5b5b5;"></div>
<div class="a" style="left:1201px;top:427px;width:22px;height:2px;background:#6a6a6a;"></div>
<div class="a" style="left:1223px;top:424px;width:2px;height:9px;background:#666;"></div>
<div class="a" style="left:1259px;top:392px;width:73px;height:21px;background:#fff;border:1px solid #ababab;"></div>
<span class="t" style="left:1266.20px;top:395.90px;font-size:11.3px;line-height:12px;color:#222;transform:scaleX(0.9287);">-27%</span>
<svg style="left:1320px;top:396px" width="8" height="14"><path d="M0.8 4l3-3.2 3 3.2z M0.8 9.6l3 3.2 3-3.2z" fill="#666"/></svg>
<div class="a" style="left:1259px;top:419px;width:73px;height:21px;background:#fff;border:1px solid #ababab;"></div>
<span class="t" style="left:1266.20px;top:422.90px;font-size:11.3px;line-height:12px;color:#222;transform:scaleX(0.9169);">219%</span>
<svg style="left:1320px;top:423px" width="8" height="14"><path d="M0.8 4l3-3.2 3 3.2z M0.8 9.6l3 3.2 3-3.2z" fill="#666"/></svg>
<div class="a" style="left:1024px;top:121px;width:323px;height:167px;background:#fff;border:1px solid #b4b4b4;box-shadow:0 1px 5px rgba(0,0,0,0.28);"></div>
<span class="t" style="left:1035.90px;top:128.60px;font-size:12px;line-height:14px;color:#5a5a5a;font-weight:bold;transform:scaleX(0.9521);">Change Chart Type</span>
<span class="t" style="left:1144.50px;top:149.90px;font-size:12px;line-height:14px;color:#555;">Change to a different type of chart.</span>
<div class="a" style="left:1035px;top:149px;width:96px;height:128px;background:#fff;border:1px solid #c6c6c6;"></div>
<svg style="left:0;top:0" width="1366" height="598" viewBox="0 0 1366 598" font-family="DejaVu Sans Mono,Liberation Mono,monospace" font-weight="bold"><rect x="1043" y="259" width="86" height="1" fill="#8f8f8f"/><text x="1039.6" y="262.2" font-size="7.5" text-anchor="middle" fill="#222">0</text><rect x="1043" y="239" width="86" height="1" fill="#8f8f8f"/><text x="1039.6" y="242.2" font-size="7.5" text-anchor="middle" fill="#222">1</text><rect x="1043" y="220" width="86" height="1" fill="#8f8f8f"/><text x="1039.6" y="223.2" font-size="7.5" text-anchor="middle" fill="#222">2</text><rect x="1043" y="199" width="86" height="1" fill="#8f8f8f"/><text x="1039.6" y="202.2" font-size="7.5" text-anchor="middle" fill="#222">3</text><rect x="1043" y="179" width="86" height="1" fill="#8f8f8f"/><text x="1039.6" y="182.2" font-size="7.5" text-anchor="middle" fill="#222">4</text><rect x="1043" y="160" width="86" height="1" fill="#8f8f8f"/><text x="1039.6" y="163.2" font-size="7.5" text-anchor="middle" fill="#222">5</text><rect x="1045" y="157" width="1" height="105" fill="#7f7f7f"/><rect x="1047.2" y="179" width="13.6" height="80" fill="#d65f3c"/><text x="1054.1" y="270.8" font-size="7.5" text-anchor="middle" fill="#222">1</text><rect x="1063.2" y="220" width="13.6" height="39" fill="#e88b3f"/><text x="1070.1" y="270.8" font-size="7.5" text-anchor="middle" fill="#222">2</text><rect x="1079.1" y="199" width="13.6" height="60" fill="#4a7ebb"/><text x="1086.0" y="270.8" font-size="7.5" text-anchor="middle" fill="#222">3</text><rect x="1095.0" y="160" width="13.6" height="99" fill="#73a797"/><text x="1102.0" y="270.8" font-size="7.5" text-anchor="middle" fill="#222">4</text><rect x="1111.0" y="199" width="13.6" height="60" fill="#9467bd"/><text x="1117.9" y="270.8" font-size="7.5" text-anchor="middle" fill="#222">5</text></svg>
<svg style="left:1080px;top:63px" width="14" height="21"><path d="M1.3 1.2v15.3l3.6-3.3 2.6 5.8 2.3-1-2.6-5.6h5z" fill="#fff" stroke="#1a1a2a" stroke-width="1.1" stroke-linejoin="round"/></svg>
</body></html>
